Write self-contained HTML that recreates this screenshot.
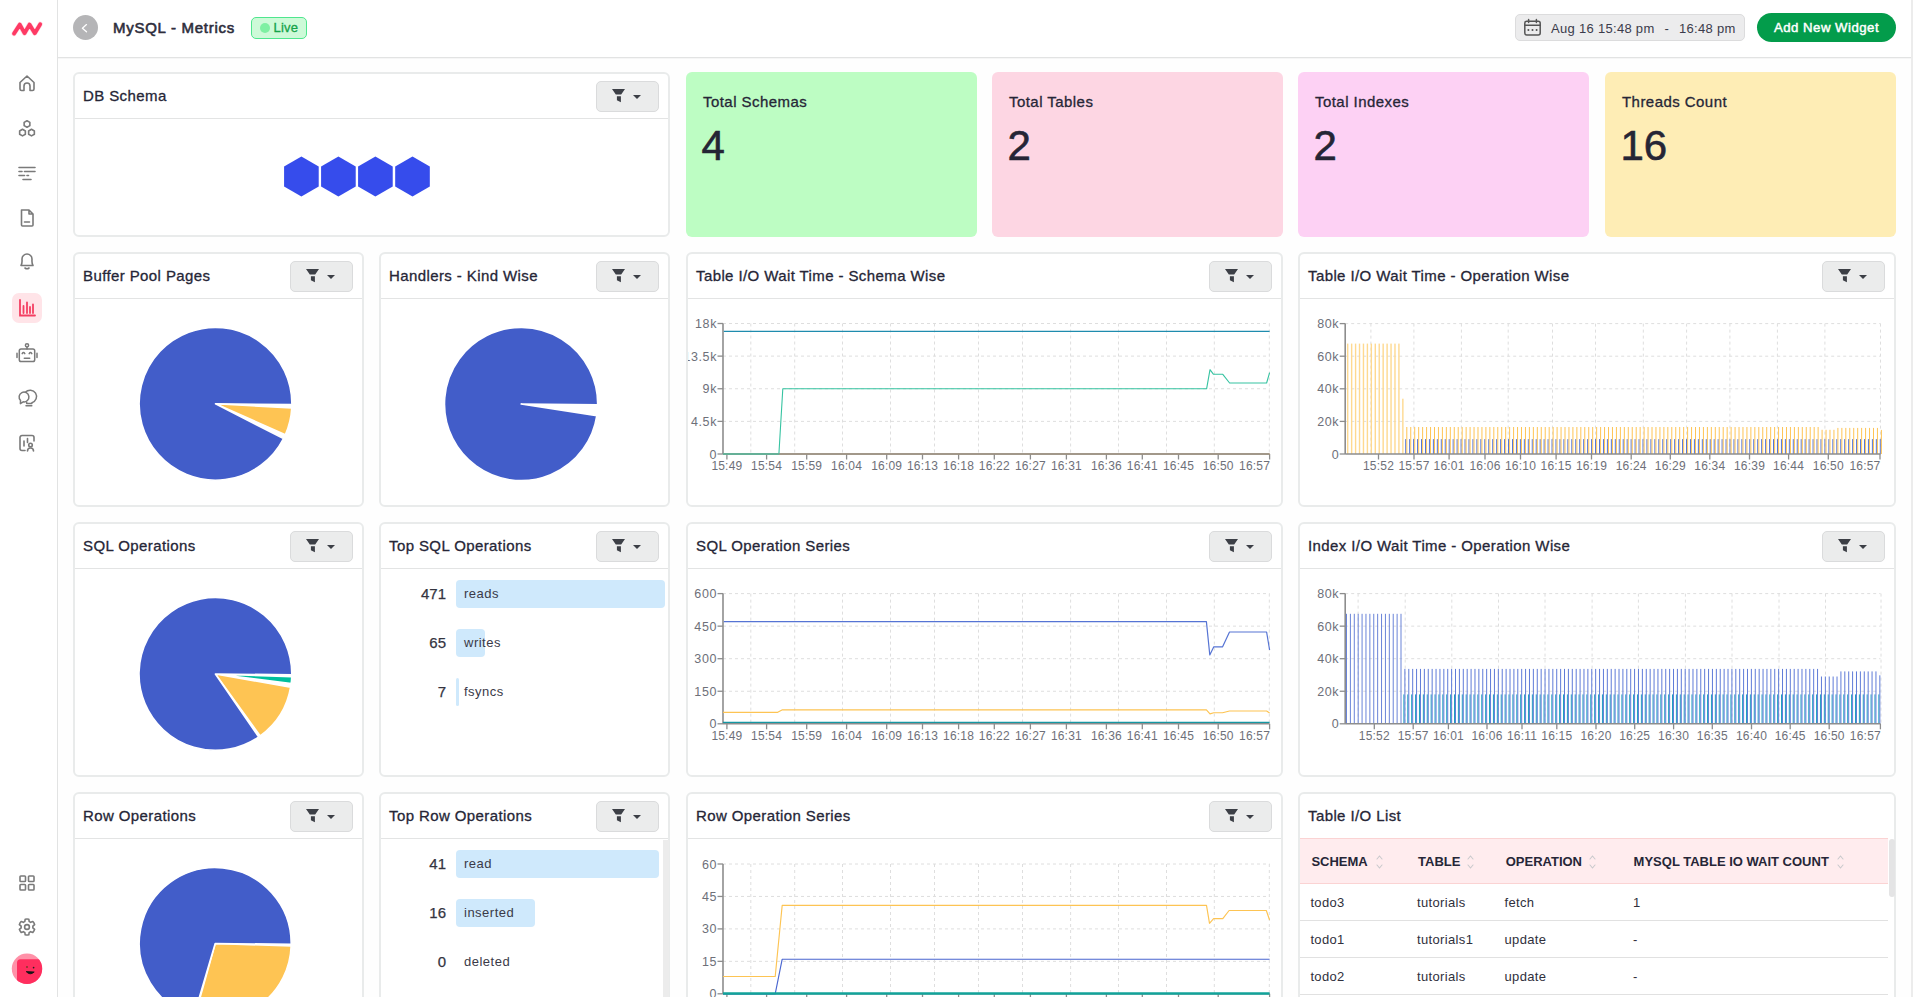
<!DOCTYPE html>
<html><head><meta charset="utf-8"><title>MySQL - Metrics</title>
<style>
*{box-sizing:border-box;margin:0;padding:0}
html,body{width:1913px;height:997px;overflow:hidden;background:#fff;font-family:"Liberation Sans", sans-serif;color:#2b2b3a}
.a{position:absolute}
.card{position:absolute;background:#fff;border:2px solid #e9ebeb;border-radius:6px;overflow:hidden}
.ttl{position:absolute;font-size:15px;letter-spacing:0.4px;color:#262637;-webkit-text-stroke:0.3px #262637;white-space:nowrap;line-height:18px}
.div{position:absolute;height:1px;background:#e3e4e4}
.fbtn{position:absolute;width:63px;height:31px;background:#ebecec;border:1px solid #dadbdc;border-radius:5px}
.stat{position:absolute;border-radius:6px}
.stat .l{position:absolute;left:17px;top:21px;font-size:15px;letter-spacing:0.45px;color:#262637;-webkit-text-stroke:0.3px #262637;white-space:nowrap;line-height:18px}
.stat .v{position:absolute;left:15.5px;top:51px;font-size:42px;color:#252535;-webkit-text-stroke:0.6px #252535;line-height:46px}
.sb svg{position:absolute}
.ax{font-size:12px;fill:#6e7079;font-family:"Liberation Sans", sans-serif;letter-spacing:0.2px}
</style></head><body>

<div class="a" style="left:0;top:0;width:57px;height:997px;background:#fff"></div>
<div class="a" style="left:57px;top:0;width:1px;height:997px;background:#e2e3e3"></div>
<div class="a" style="left:58px;top:58px;width:1853px;height:939px;background:#fefefe"></div>
<div class="a" style="left:58px;top:58px;width:1853px;height:1px;background:#f6f6f6"></div>
<div class="a" style="left:58px;top:57px;width:1853px;height:1px;background:#e2e3e3"></div>
<div class="a" style="left:1911px;top:0;width:2px;height:997px;background:#ececec"></div>
<svg class="a" style="left:10px;top:18px" width="36" height="22" viewBox="0 0 36 22">
<path d="M4 15.6 L9.8 6.6 L14.5 15.2 L19.5 6.6 L24.8 15.2 L30.2 6.2" fill="none" stroke="#ff8fab" stroke-width="5" stroke-linejoin="round" stroke-linecap="round" opacity="0.35"/><path d="M4 15.6 L9.8 6.6 L14.5 15.2 L19.5 6.6 L24.8 15.2 L30.2 6.2" fill="none" stroke="#fe3a64" stroke-width="3.8" stroke-linejoin="round" stroke-linecap="round"/></svg>
<svg class="a" style="left:17.0px;top:73.0px" width="20" height="20" viewBox="0 0 20 20" fill="none" stroke="#7a7a7a" stroke-width="1.6" stroke-linecap="round" stroke-linejoin="round"><path d="M3 9.5 L10 3 L17 9.5 V16 A1.5 1.5 0 0 1 15.5 17.5 H13 V13 A3 3 0 0 0 7 13 V17.5 H4.5 A1.5 1.5 0 0 1 3 16 Z"/></svg>
<svg class="a" style="left:17.0px;top:118.5px" width="20" height="20" viewBox="0 0 20 20" fill="none" stroke="#7a7a7a" stroke-width="1.6" stroke-linecap="round" stroke-linejoin="round"><path d="M10.00 1.70 L12.86 3.35 L12.86 6.65 L10.00 8.30 L7.14 6.65 L7.14 3.35 Z M5.50 10.30 L8.36 11.95 L8.36 15.25 L5.50 16.90 L2.64 15.25 L2.64 11.95 Z M14.50 10.30 L17.36 11.95 L17.36 15.25 L14.50 16.90 L11.64 15.25 L11.64 11.95 Z"/></svg>
<svg class="a" style="left:17.0px;top:164.0px" width="20" height="20" viewBox="0 0 20 20" fill="none" stroke="#7a7a7a" stroke-width="1.6" stroke-linecap="round" stroke-linejoin="round"><path d="M2 3.5 H18 M2 7.5 H5 M7.5 7.5 H18 M2 11.5 H7.5 M10 11.5 H11.5 M6 15.5 H14"/></svg>
<svg class="a" style="left:17.0px;top:207.5px" width="20" height="20" viewBox="0 0 20 20" fill="none" stroke="#7a7a7a" stroke-width="1.6" stroke-linecap="round" stroke-linejoin="round"><path d="M4.5 2 H12 L16 6 V17 A1 1 0 0 1 15 18 H5.5 A1 1 0 0 1 4.5 17 Z M12 2 V6 H16 M7.5 14 H12.5"/></svg>
<svg class="a" style="left:17.0px;top:251.0px" width="20" height="20" viewBox="0 0 20 20" fill="none" stroke="#7a7a7a" stroke-width="1.6" stroke-linecap="round" stroke-linejoin="round"><path d="M4 14.5 C5.5 12.5 5 10 5 8 A5 5 0 0 1 15 8 C15 10 14.5 12.5 16 14.5 Z M8 17 Q10 18.5 12 17"/></svg>
<div class="a" style="left:12px;top:293px;width:30px;height:30px;border-radius:7px;background:#ffe4e8"></div>
<svg class="a" style="left:17px;top:298px" width="20" height="20" viewBox="0 0 20 20" fill="none" stroke="#f43f62" stroke-width="1.8" stroke-linecap="round"><path d="M3 2 V17.5 H18 M6.5 8 V15 M10 4.5 V15 M13 9 V15 M16 6.5 V15"/></svg>
<svg class="a" style="left:12px;top:335px" width="30" height="75" viewBox="12 335 30 75" fill="none" stroke="#7a7a7a" stroke-width="1.5" stroke-linecap="round" stroke-linejoin="round">
<circle cx="27" cy="345.3" r="1.6"/><path d="M27 347 V349"/>
<rect x="19.3" y="349" width="15.4" height="12.6" rx="1.8"/>
<path d="M17 353.2 V357.4 M37 353.2 V357.4 M24.3 358.2 H29.7 M22.2 353.6 Q23.5 351.4 24.8 353.6 M29.2 353.6 Q30.5 351.4 31.8 353.6"/>
<path d="M20.54 400.46 A4.9 4.9 0 1 1 23.15 401.83 L20.4 403.6 Z"/>
<path d="M25.36 392.3 A6.4 6.4 0 1 1 31.9 402.7 V403.6 H26.7 V402.4 M26 405.8 H31.8"/>
</svg>
<svg class="a" style="left:17.0px;top:433.0px" width="20" height="20" viewBox="0 0 20 20" fill="none" stroke="#7a7a7a" stroke-width="1.6" stroke-linecap="round" stroke-linejoin="round"><path d="M8 17.5 H5 A2 2 0 0 1 3 15.5 V4.5 A2 2 0 0 1 5 2.5 H15 A2 2 0 0 1 17 4.5 V8 M7 8 V13 M10.5 5.5 V9.5"/><circle cx="13.5" cy="12" r="1.8"/><path d="M10.5 18 Q10.5 15 13.5 15 Q16.5 15 16.5 18"/></svg>
<svg class="a" style="left:17.0px;top:873.0px" width="20" height="20" viewBox="0 0 20 20" fill="none" stroke="#7a7a7a" stroke-width="1.6" stroke-linecap="round" stroke-linejoin="round"><rect x="3" y="3" width="5.5" height="5.5" rx="0.8"/><rect x="11.5" y="3" width="5.5" height="5.5" rx="0.8"/><rect x="3" y="11.5" width="5.5" height="5.5" rx="0.8"/><rect x="11.5" y="11.5" width="5.5" height="5.5" rx="0.8"/></svg>
<svg class="a" style="left:17.0px;top:917.0px" width="20" height="20" viewBox="0 0 20 20" fill="none" stroke="#7a7a7a" stroke-width="1.6" stroke-linecap="round" stroke-linejoin="round"><path d="M8.20 2.21 A8.0 8.0 0 0 1 11.80 2.21 L12.21 4.53 A5.9 5.9 0 0 1 13.63 5.35 L15.85 4.54 A8.0 8.0 0 0 1 17.65 7.66 L15.84 9.18 A5.9 5.9 0 0 1 15.84 10.82 L17.65 12.34 A8.0 8.0 0 0 1 15.85 15.46 L13.63 14.65 A5.9 5.9 0 0 1 12.21 15.47 L11.80 17.79 A8.0 8.0 0 0 1 8.20 17.79 L7.79 15.47 A5.9 5.9 0 0 1 6.37 14.65 L4.15 15.46 A8.0 8.0 0 0 1 2.35 12.34 L4.16 10.82 A5.9 5.9 0 0 1 4.16 9.18 L2.35 7.66 A8.0 8.0 0 0 1 4.15 4.54 L6.37 5.35 A5.9 5.9 0 0 1 7.79 4.53 Z"/><circle cx="10" cy="10" r="2.4"/></svg>
<svg class="a" style="left:11px;top:953px" width="32" height="32" viewBox="0 0 32 32">
<defs><clipPath id="avc"><circle cx="16" cy="15.8" r="15.2"/></clipPath></defs>
<circle cx="16" cy="15.8" r="15.2" fill="#ff91a8"/>
<g clip-path="url(#avc)"><rect x="6" y="6.2" width="30" height="30" rx="3.5" fill="#ff2e5e"/></g>
<circle cx="16" cy="14" r="0.9" fill="#7a3a22"/><circle cx="22.6" cy="14.6" r="0.85" fill="#222"/>
<path d="M15.2 18.6 Q19 22.8 23.2 19 Z" fill="#151515" stroke="#151515" stroke-width="0.9" stroke-linejoin="round"/></svg>
<div class="a" style="left:73px;top:15px;width:25px;height:25px;border-radius:50%;background:#b5b5b7"></div>
<svg class="a" style="left:73px;top:15px" width="25" height="25" viewBox="0 0 25 25"><path d="M13.5 9.6 L9.4 13.2 L13.5 16.8" fill="none" stroke="#fff" stroke-width="1.3" stroke-linecap="round" stroke-linejoin="round"/></svg>
<div class="a" style="left:113px;top:19px;font-size:15px;letter-spacing:0.72px;color:#2e2e3c;-webkit-text-stroke:0.6px #2e2e3c;line-height:18px;white-space:nowrap">MySQL - Metrics</div>
<div class="a" style="left:251px;top:17px;width:56px;height:22px;border-radius:5px;background:#cdfad8;border:1px solid #4fe68e"></div>
<div class="a" style="left:259.5px;top:22.8px;width:10.5px;height:10.5px;border-radius:50%;background:#7ef0a2"></div>
<div class="a" style="left:273.5px;top:20px;font-size:13px;color:#15a34a;line-height:16px;letter-spacing:0.2px;-webkit-text-stroke:0.3px #15a34a">Live</div>
<div class="a" style="left:1515px;top:14px;width:230px;height:27px;border-radius:5px;background:#ececed;border:1px solid #dcdcdd"></div>
<svg class="a" style="left:1523px;top:18px" width="19" height="19" viewBox="0 0 19 19" fill="none" stroke="#555" stroke-width="1.5" stroke-linecap="round"><rect x="1.8" y="3.2" width="15.4" height="13.8" rx="2"/><path d="M1.8 7.3 H17.2 M5.6 1.5 V4.5 M13.4 1.5 V4.5"/><path d="M5.3 12 H5.5 M9.4 12 H9.6 M13.5 12 H13.7" stroke-width="1.8"/></svg>
<div class="a" style="left:1551px;top:21px;font-size:13px;color:#3b3b4b;line-height:15px;white-space:pre;letter-spacing:0.3px">Aug 16 15:48 pm</div>
<div class="a" style="left:1664.5px;top:21px;font-size:13px;color:#3b3b4b;line-height:15px;white-space:pre">-</div>
<div class="a" style="left:1679px;top:21px;font-size:13px;color:#3b3b4b;line-height:15px;white-space:pre;letter-spacing:0.3px">16:48 pm</div>
<div class="a" style="left:1757px;top:13px;width:139px;height:29px;border-radius:15px;background:#039c4b"></div>
<div class="a" style="left:1757px;top:20px;width:139px;text-align:center;font-size:13.2px;color:#fff;line-height:15px;letter-spacing:0.5px;-webkit-text-stroke:0.45px #fff">Add New Widget</div>
<div class="card" style="left:73px;top:72px;width:597px;height:165px"></div>
<div class="ttl" style="left:83px;top:87px">DB Schema</div>
<div class="div" style="left:75px;top:118px;width:593px"></div>
<div class="fbtn" style="left:595.5px;top:81px"></div>
<svg class="a" style="left:612.2px;top:89px" width="30" height="15" viewBox="0 0 30 15"><path d="M0 0 H13 L9.2 5.5 H3.8 Z M4.9 7.2 H8.9 V13.2 L4.9 11.3 Z" fill="#3c3f46"/><path d="M21 6 H29 L25 10 Z" fill="#3c3f46"/></svg>
<svg class="a" style="left:0;top:0;overflow:visible" width="1" height="1"><polygon points="301.40,156.50 318.72,166.50 318.72,186.50 301.40,196.50 284.08,186.50 284.08,166.50" fill="#364cec"/></svg>
<svg class="a" style="left:0;top:0;overflow:visible" width="1" height="1"><polygon points="338.40,156.50 355.72,166.50 355.72,186.50 338.40,196.50 321.08,186.50 321.08,166.50" fill="#364cec"/></svg>
<svg class="a" style="left:0;top:0;overflow:visible" width="1" height="1"><polygon points="375.40,156.50 392.72,166.50 392.72,186.50 375.40,196.50 358.08,186.50 358.08,166.50" fill="#364cec"/></svg>
<svg class="a" style="left:0;top:0;overflow:visible" width="1" height="1"><polygon points="412.50,156.50 429.82,166.50 429.82,186.50 412.50,196.50 395.18,186.50 395.18,166.50" fill="#364cec"/></svg>
<div class="stat" style="left:686px;top:72px;width:291px;height:165px;background:#bdfdc3"><div class="l">Total Schemas</div><div class="v">4</div></div>
<div class="stat" style="left:992px;top:72px;width:291px;height:165px;background:#fdd6e3"><div class="l">Total Tables</div><div class="v">2</div></div>
<div class="stat" style="left:1298px;top:72px;width:291px;height:165px;background:#fdd1f4"><div class="l">Total Indexes</div><div class="v">2</div></div>
<div class="stat" style="left:1605px;top:72px;width:291px;height:165px;background:#feedb5"><div class="l">Threads Count</div><div class="v">16</div></div>
<div class="card" style="left:73px;top:252px;width:291px;height:255px"></div>
<div class="ttl" style="left:83px;top:267px">Buffer Pool Pages</div>
<div class="div" style="left:75px;top:298px;width:287px"></div>
<div class="fbtn" style="left:289.5px;top:261px"></div>
<svg class="a" style="left:306.2px;top:269px" width="30" height="15" viewBox="0 0 30 15"><path d="M0 0 H13 L9.2 5.5 H3.8 Z M4.9 7.2 H8.9 V13.2 L4.9 11.3 Z" fill="#3c3f46"/><path d="M21 6 H29 L25 10 Z" fill="#3c3f46"/></svg>
<div class="card" style="left:379px;top:252px;width:291px;height:255px"></div>
<div class="ttl" style="left:389px;top:267px">Handlers - Kind Wise</div>
<div class="div" style="left:381px;top:298px;width:287px"></div>
<div class="fbtn" style="left:595.5px;top:261px"></div>
<svg class="a" style="left:612.2px;top:269px" width="30" height="15" viewBox="0 0 30 15"><path d="M0 0 H13 L9.2 5.5 H3.8 Z M4.9 7.2 H8.9 V13.2 L4.9 11.3 Z" fill="#3c3f46"/><path d="M21 6 H29 L25 10 Z" fill="#3c3f46"/></svg>
<div class="card" style="left:686px;top:252px;width:597px;height:255px"></div>
<div class="ttl" style="left:696px;top:267px">Table I/O Wait Time - Schema Wise</div>
<div class="div" style="left:688px;top:298px;width:593px"></div>
<div class="fbtn" style="left:1208.5px;top:261px"></div>
<svg class="a" style="left:1225.2px;top:269px" width="30" height="15" viewBox="0 0 30 15"><path d="M0 0 H13 L9.2 5.5 H3.8 Z M4.9 7.2 H8.9 V13.2 L4.9 11.3 Z" fill="#3c3f46"/><path d="M21 6 H29 L25 10 Z" fill="#3c3f46"/></svg>
<div class="card" style="left:1298px;top:252px;width:598px;height:255px"></div>
<div class="ttl" style="left:1308px;top:267px">Table I/O Wait Time - Operation Wise</div>
<div class="div" style="left:1300px;top:298px;width:594px"></div>
<div class="fbtn" style="left:1821.5px;top:261px"></div>
<svg class="a" style="left:1838.2px;top:269px" width="30" height="15" viewBox="0 0 30 15"><path d="M0 0 H13 L9.2 5.5 H3.8 Z M4.9 7.2 H8.9 V13.2 L4.9 11.3 Z" fill="#3c3f46"/><path d="M21 6 H29 L25 10 Z" fill="#3c3f46"/></svg>
<div class="card" style="left:73px;top:522px;width:291px;height:255px"></div>
<div class="ttl" style="left:83px;top:537px">SQL Operations</div>
<div class="div" style="left:75px;top:568px;width:287px"></div>
<div class="fbtn" style="left:289.5px;top:531px"></div>
<svg class="a" style="left:306.2px;top:539px" width="30" height="15" viewBox="0 0 30 15"><path d="M0 0 H13 L9.2 5.5 H3.8 Z M4.9 7.2 H8.9 V13.2 L4.9 11.3 Z" fill="#3c3f46"/><path d="M21 6 H29 L25 10 Z" fill="#3c3f46"/></svg>
<div class="card" style="left:379px;top:522px;width:291px;height:255px"></div>
<div class="ttl" style="left:389px;top:537px">Top SQL Operations</div>
<div class="div" style="left:381px;top:568px;width:287px"></div>
<div class="fbtn" style="left:595.5px;top:531px"></div>
<svg class="a" style="left:612.2px;top:539px" width="30" height="15" viewBox="0 0 30 15"><path d="M0 0 H13 L9.2 5.5 H3.8 Z M4.9 7.2 H8.9 V13.2 L4.9 11.3 Z" fill="#3c3f46"/><path d="M21 6 H29 L25 10 Z" fill="#3c3f46"/></svg>
<div class="card" style="left:686px;top:522px;width:597px;height:255px"></div>
<div class="ttl" style="left:696px;top:537px">SQL Operation Series</div>
<div class="div" style="left:688px;top:568px;width:593px"></div>
<div class="fbtn" style="left:1208.5px;top:531px"></div>
<svg class="a" style="left:1225.2px;top:539px" width="30" height="15" viewBox="0 0 30 15"><path d="M0 0 H13 L9.2 5.5 H3.8 Z M4.9 7.2 H8.9 V13.2 L4.9 11.3 Z" fill="#3c3f46"/><path d="M21 6 H29 L25 10 Z" fill="#3c3f46"/></svg>
<div class="card" style="left:1298px;top:522px;width:598px;height:255px"></div>
<div class="ttl" style="left:1308px;top:537px">Index I/O Wait Time - Operation Wise</div>
<div class="div" style="left:1300px;top:568px;width:594px"></div>
<div class="fbtn" style="left:1821.5px;top:531px"></div>
<svg class="a" style="left:1838.2px;top:539px" width="30" height="15" viewBox="0 0 30 15"><path d="M0 0 H13 L9.2 5.5 H3.8 Z M4.9 7.2 H8.9 V13.2 L4.9 11.3 Z" fill="#3c3f46"/><path d="M21 6 H29 L25 10 Z" fill="#3c3f46"/></svg>
<div class="card" style="left:73px;top:792px;width:291px;height:255px"></div>
<div class="ttl" style="left:83px;top:807px">Row Operations</div>
<div class="div" style="left:75px;top:838px;width:287px"></div>
<div class="fbtn" style="left:289.5px;top:801px"></div>
<svg class="a" style="left:306.2px;top:809px" width="30" height="15" viewBox="0 0 30 15"><path d="M0 0 H13 L9.2 5.5 H3.8 Z M4.9 7.2 H8.9 V13.2 L4.9 11.3 Z" fill="#3c3f46"/><path d="M21 6 H29 L25 10 Z" fill="#3c3f46"/></svg>
<div class="card" style="left:379px;top:792px;width:291px;height:255px"></div>
<div class="ttl" style="left:389px;top:807px">Top Row Operations</div>
<div class="div" style="left:381px;top:838px;width:287px"></div>
<div class="fbtn" style="left:595.5px;top:801px"></div>
<svg class="a" style="left:612.2px;top:809px" width="30" height="15" viewBox="0 0 30 15"><path d="M0 0 H13 L9.2 5.5 H3.8 Z M4.9 7.2 H8.9 V13.2 L4.9 11.3 Z" fill="#3c3f46"/><path d="M21 6 H29 L25 10 Z" fill="#3c3f46"/></svg>
<div class="card" style="left:686px;top:792px;width:597px;height:255px"></div>
<div class="ttl" style="left:696px;top:807px">Row Operation Series</div>
<div class="div" style="left:688px;top:838px;width:593px"></div>
<div class="fbtn" style="left:1208.5px;top:801px"></div>
<svg class="a" style="left:1225.2px;top:809px" width="30" height="15" viewBox="0 0 30 15"><path d="M0 0 H13 L9.2 5.5 H3.8 Z M4.9 7.2 H8.9 V13.2 L4.9 11.3 Z" fill="#3c3f46"/><path d="M21 6 H29 L25 10 Z" fill="#3c3f46"/></svg>
<div class="card" style="left:1298px;top:792px;width:598px;height:255px"></div>
<div class="ttl" style="left:1308px;top:807px">Table I/O List</div>
<svg class="a" style="left:0;top:0" width="1913" height="997" viewBox="0 0 1913 997"><clipPath id="c23"><rect x="688" y="300" width="593" height="205"/></clipPath>
<g clip-path="url(#c23)">
<line x1="723" y1="323.50" x2="1269.6" y2="323.50" stroke="#dedede" stroke-width="1" stroke-dasharray="3 3"/>
<line x1="717.5" y1="323.50" x2="723" y2="323.50" stroke="#8d8d8d" stroke-width="1.3"/>
<text x="717" y="328.00" text-anchor="end" class="ax" style="font-size:12.5px;letter-spacing:0.6px">18k</text>
<line x1="723" y1="356.12" x2="1269.6" y2="356.12" stroke="#dedede" stroke-width="1" stroke-dasharray="3 3"/>
<line x1="717.5" y1="356.12" x2="723" y2="356.12" stroke="#8d8d8d" stroke-width="1.3"/>
<text x="717" y="360.62" text-anchor="end" class="ax" style="font-size:12.5px;letter-spacing:0.6px">13.5k</text>
<line x1="723" y1="388.75" x2="1269.6" y2="388.75" stroke="#dedede" stroke-width="1" stroke-dasharray="3 3"/>
<line x1="717.5" y1="388.75" x2="723" y2="388.75" stroke="#8d8d8d" stroke-width="1.3"/>
<text x="717" y="393.25" text-anchor="end" class="ax" style="font-size:12.5px;letter-spacing:0.6px">9k</text>
<line x1="723" y1="421.38" x2="1269.6" y2="421.38" stroke="#dedede" stroke-width="1" stroke-dasharray="3 3"/>
<line x1="717.5" y1="421.38" x2="723" y2="421.38" stroke="#8d8d8d" stroke-width="1.3"/>
<text x="717" y="425.88" text-anchor="end" class="ax" style="font-size:12.5px;letter-spacing:0.6px">4.5k</text>
<line x1="717.5" y1="454.00" x2="723" y2="454.00" stroke="#8d8d8d" stroke-width="1.3"/>
<text x="717" y="458.50" text-anchor="end" class="ax" style="font-size:12.5px;letter-spacing:0.6px">0</text>
<line x1="750.8" y1="323.5" x2="750.8" y2="454" stroke="#dedede" stroke-width="1" stroke-dasharray="3 3"/>
<line x1="794.7" y1="323.5" x2="794.7" y2="454" stroke="#dedede" stroke-width="1" stroke-dasharray="3 3"/>
<line x1="842.5" y1="323.5" x2="842.5" y2="454" stroke="#dedede" stroke-width="1" stroke-dasharray="3 3"/>
<line x1="890.5" y1="323.5" x2="890.5" y2="454" stroke="#dedede" stroke-width="1" stroke-dasharray="3 3"/>
<line x1="934.5" y1="323.5" x2="934.5" y2="454" stroke="#dedede" stroke-width="1" stroke-dasharray="3 3"/>
<line x1="978.5" y1="323.5" x2="978.5" y2="454" stroke="#dedede" stroke-width="1" stroke-dasharray="3 3"/>
<line x1="1022.5" y1="323.5" x2="1022.5" y2="454" stroke="#dedede" stroke-width="1" stroke-dasharray="3 3"/>
<line x1="1070.6" y1="323.5" x2="1070.6" y2="454" stroke="#dedede" stroke-width="1" stroke-dasharray="3 3"/>
<line x1="1118.5" y1="323.5" x2="1118.5" y2="454" stroke="#dedede" stroke-width="1" stroke-dasharray="3 3"/>
<line x1="1166.5" y1="323.5" x2="1166.5" y2="454" stroke="#dedede" stroke-width="1" stroke-dasharray="3 3"/>
<line x1="1214.3" y1="323.5" x2="1214.3" y2="454" stroke="#dedede" stroke-width="1" stroke-dasharray="3 3"/>
<line x1="1269.3" y1="323.5" x2="1269.3" y2="454" stroke="#dedede" stroke-width="1" stroke-dasharray="3 3"/>
<line x1="726.9" y1="454" x2="726.9" y2="459.5" stroke="#8d8d8d" stroke-width="1.3"/>
<text x="726.9" y="470.20" text-anchor="middle" class="ax">15:49</text>
<line x1="766.6" y1="454" x2="766.6" y2="459.5" stroke="#8d8d8d" stroke-width="1.3"/>
<text x="766.6" y="470.20" text-anchor="middle" class="ax">15:54</text>
<line x1="806.7" y1="454" x2="806.7" y2="459.5" stroke="#8d8d8d" stroke-width="1.3"/>
<text x="806.7" y="470.20" text-anchor="middle" class="ax">15:59</text>
<line x1="846.6" y1="454" x2="846.6" y2="459.5" stroke="#8d8d8d" stroke-width="1.3"/>
<text x="846.6" y="470.20" text-anchor="middle" class="ax">16:04</text>
<line x1="886.7" y1="454" x2="886.7" y2="459.5" stroke="#8d8d8d" stroke-width="1.3"/>
<text x="886.7" y="470.20" text-anchor="middle" class="ax">16:09</text>
<line x1="922.5" y1="454" x2="922.5" y2="459.5" stroke="#8d8d8d" stroke-width="1.3"/>
<text x="922.5" y="470.20" text-anchor="middle" class="ax">16:13</text>
<line x1="958.6" y1="454" x2="958.6" y2="459.5" stroke="#8d8d8d" stroke-width="1.3"/>
<text x="958.6" y="470.20" text-anchor="middle" class="ax">16:18</text>
<line x1="994.3" y1="454" x2="994.3" y2="459.5" stroke="#8d8d8d" stroke-width="1.3"/>
<text x="994.3" y="470.20" text-anchor="middle" class="ax">16:22</text>
<line x1="1030.4" y1="454" x2="1030.4" y2="459.5" stroke="#8d8d8d" stroke-width="1.3"/>
<text x="1030.4" y="470.20" text-anchor="middle" class="ax">16:27</text>
<line x1="1066.4" y1="454" x2="1066.4" y2="459.5" stroke="#8d8d8d" stroke-width="1.3"/>
<text x="1066.4" y="470.20" text-anchor="middle" class="ax">16:31</text>
<line x1="1106.4" y1="454" x2="1106.4" y2="459.5" stroke="#8d8d8d" stroke-width="1.3"/>
<text x="1106.4" y="470.20" text-anchor="middle" class="ax">16:36</text>
<line x1="1142.3" y1="454" x2="1142.3" y2="459.5" stroke="#8d8d8d" stroke-width="1.3"/>
<text x="1142.3" y="470.20" text-anchor="middle" class="ax">16:41</text>
<line x1="1178.5" y1="454" x2="1178.5" y2="459.5" stroke="#8d8d8d" stroke-width="1.3"/>
<text x="1178.5" y="470.20" text-anchor="middle" class="ax">16:45</text>
<line x1="1218.2" y1="454" x2="1218.2" y2="459.5" stroke="#8d8d8d" stroke-width="1.3"/>
<text x="1218.2" y="470.20" text-anchor="middle" class="ax">16:50</text>
<line x1="1269.6" y1="454" x2="1269.6" y2="459.5" stroke="#8d8d8d" stroke-width="1.3"/>
<text x="1270.1" y="470.20" text-anchor="end" class="ax">16:57</text>
<path d="M723.00 454.00 L1269.60 454.00" fill="none" stroke="#d8a45a" stroke-width="1.6" stroke-linejoin="round" opacity="1"/>
<path d="M723.00 454.00 L778.90 454.00 L782.80 388.80 L1206.60 388.80 L1210.00 369.70 L1213.50 374.30 L1222.80 374.30 L1229.60 383.00 L1266.60 383.00 L1269.60 372.70" fill="none" stroke="#36c3a1" stroke-width="1.1" stroke-linejoin="round" opacity="1"/>
<line x1="723" y1="323.5" x2="723" y2="454" stroke="#8d8d8d" stroke-width="1.6"/>
<line x1="723" y1="454" x2="1269.6" y2="454" stroke="#8d8d8d" stroke-width="1.6"/>
<path d="M723.00 454.00 L778.90 454.00" fill="none" stroke="#58b89a" stroke-width="1.6" stroke-linejoin="round" opacity="1"/>
<path d="M723.80 331.30 L1269.60 331.30" fill="none" stroke="#1f8cae" stroke-width="1.15" stroke-linejoin="round" opacity="1"/>
</g>
<clipPath id="c33"><rect x="688" y="570" width="593" height="205"/></clipPath>
<g clip-path="url(#c33)">
<line x1="723" y1="593.60" x2="1269.6" y2="593.60" stroke="#dedede" stroke-width="1" stroke-dasharray="3 3"/>
<line x1="717.5" y1="593.60" x2="723" y2="593.60" stroke="#8d8d8d" stroke-width="1.3"/>
<text x="717" y="598.10" text-anchor="end" class="ax" style="font-size:12.5px;letter-spacing:0.6px">600</text>
<line x1="723" y1="626.15" x2="1269.6" y2="626.15" stroke="#dedede" stroke-width="1" stroke-dasharray="3 3"/>
<line x1="717.5" y1="626.15" x2="723" y2="626.15" stroke="#8d8d8d" stroke-width="1.3"/>
<text x="717" y="630.65" text-anchor="end" class="ax" style="font-size:12.5px;letter-spacing:0.6px">450</text>
<line x1="723" y1="658.70" x2="1269.6" y2="658.70" stroke="#dedede" stroke-width="1" stroke-dasharray="3 3"/>
<line x1="717.5" y1="658.70" x2="723" y2="658.70" stroke="#8d8d8d" stroke-width="1.3"/>
<text x="717" y="663.20" text-anchor="end" class="ax" style="font-size:12.5px;letter-spacing:0.6px">300</text>
<line x1="723" y1="691.25" x2="1269.6" y2="691.25" stroke="#dedede" stroke-width="1" stroke-dasharray="3 3"/>
<line x1="717.5" y1="691.25" x2="723" y2="691.25" stroke="#8d8d8d" stroke-width="1.3"/>
<text x="717" y="695.75" text-anchor="end" class="ax" style="font-size:12.5px;letter-spacing:0.6px">150</text>
<line x1="717.5" y1="723.80" x2="723" y2="723.80" stroke="#8d8d8d" stroke-width="1.3"/>
<text x="717" y="728.30" text-anchor="end" class="ax" style="font-size:12.5px;letter-spacing:0.6px">0</text>
<line x1="750.8" y1="593.6" x2="750.8" y2="723.8" stroke="#dedede" stroke-width="1" stroke-dasharray="3 3"/>
<line x1="794.7" y1="593.6" x2="794.7" y2="723.8" stroke="#dedede" stroke-width="1" stroke-dasharray="3 3"/>
<line x1="842.5" y1="593.6" x2="842.5" y2="723.8" stroke="#dedede" stroke-width="1" stroke-dasharray="3 3"/>
<line x1="890.5" y1="593.6" x2="890.5" y2="723.8" stroke="#dedede" stroke-width="1" stroke-dasharray="3 3"/>
<line x1="934.5" y1="593.6" x2="934.5" y2="723.8" stroke="#dedede" stroke-width="1" stroke-dasharray="3 3"/>
<line x1="978.5" y1="593.6" x2="978.5" y2="723.8" stroke="#dedede" stroke-width="1" stroke-dasharray="3 3"/>
<line x1="1022.5" y1="593.6" x2="1022.5" y2="723.8" stroke="#dedede" stroke-width="1" stroke-dasharray="3 3"/>
<line x1="1070.6" y1="593.6" x2="1070.6" y2="723.8" stroke="#dedede" stroke-width="1" stroke-dasharray="3 3"/>
<line x1="1118.5" y1="593.6" x2="1118.5" y2="723.8" stroke="#dedede" stroke-width="1" stroke-dasharray="3 3"/>
<line x1="1166.5" y1="593.6" x2="1166.5" y2="723.8" stroke="#dedede" stroke-width="1" stroke-dasharray="3 3"/>
<line x1="1214.3" y1="593.6" x2="1214.3" y2="723.8" stroke="#dedede" stroke-width="1" stroke-dasharray="3 3"/>
<line x1="1269.3" y1="593.6" x2="1269.3" y2="723.8" stroke="#dedede" stroke-width="1" stroke-dasharray="3 3"/>
<line x1="726.9" y1="723.8" x2="726.9" y2="729.3" stroke="#8d8d8d" stroke-width="1.3"/>
<text x="726.9" y="740.00" text-anchor="middle" class="ax">15:49</text>
<line x1="766.6" y1="723.8" x2="766.6" y2="729.3" stroke="#8d8d8d" stroke-width="1.3"/>
<text x="766.6" y="740.00" text-anchor="middle" class="ax">15:54</text>
<line x1="806.7" y1="723.8" x2="806.7" y2="729.3" stroke="#8d8d8d" stroke-width="1.3"/>
<text x="806.7" y="740.00" text-anchor="middle" class="ax">15:59</text>
<line x1="846.6" y1="723.8" x2="846.6" y2="729.3" stroke="#8d8d8d" stroke-width="1.3"/>
<text x="846.6" y="740.00" text-anchor="middle" class="ax">16:04</text>
<line x1="886.7" y1="723.8" x2="886.7" y2="729.3" stroke="#8d8d8d" stroke-width="1.3"/>
<text x="886.7" y="740.00" text-anchor="middle" class="ax">16:09</text>
<line x1="922.5" y1="723.8" x2="922.5" y2="729.3" stroke="#8d8d8d" stroke-width="1.3"/>
<text x="922.5" y="740.00" text-anchor="middle" class="ax">16:13</text>
<line x1="958.6" y1="723.8" x2="958.6" y2="729.3" stroke="#8d8d8d" stroke-width="1.3"/>
<text x="958.6" y="740.00" text-anchor="middle" class="ax">16:18</text>
<line x1="994.3" y1="723.8" x2="994.3" y2="729.3" stroke="#8d8d8d" stroke-width="1.3"/>
<text x="994.3" y="740.00" text-anchor="middle" class="ax">16:22</text>
<line x1="1030.4" y1="723.8" x2="1030.4" y2="729.3" stroke="#8d8d8d" stroke-width="1.3"/>
<text x="1030.4" y="740.00" text-anchor="middle" class="ax">16:27</text>
<line x1="1066.4" y1="723.8" x2="1066.4" y2="729.3" stroke="#8d8d8d" stroke-width="1.3"/>
<text x="1066.4" y="740.00" text-anchor="middle" class="ax">16:31</text>
<line x1="1106.4" y1="723.8" x2="1106.4" y2="729.3" stroke="#8d8d8d" stroke-width="1.3"/>
<text x="1106.4" y="740.00" text-anchor="middle" class="ax">16:36</text>
<line x1="1142.3" y1="723.8" x2="1142.3" y2="729.3" stroke="#8d8d8d" stroke-width="1.3"/>
<text x="1142.3" y="740.00" text-anchor="middle" class="ax">16:41</text>
<line x1="1178.5" y1="723.8" x2="1178.5" y2="729.3" stroke="#8d8d8d" stroke-width="1.3"/>
<text x="1178.5" y="740.00" text-anchor="middle" class="ax">16:45</text>
<line x1="1218.2" y1="723.8" x2="1218.2" y2="729.3" stroke="#8d8d8d" stroke-width="1.3"/>
<text x="1218.2" y="740.00" text-anchor="middle" class="ax">16:50</text>
<line x1="1269.6" y1="723.8" x2="1269.6" y2="729.3" stroke="#8d8d8d" stroke-width="1.3"/>
<text x="1270.1" y="740.00" text-anchor="end" class="ax">16:57</text>
<line x1="723" y1="593.6" x2="723" y2="723.8" stroke="#8d8d8d" stroke-width="1.6"/>
<line x1="723" y1="723.8" x2="1269.6" y2="723.8" stroke="#8d8d8d" stroke-width="1.6"/>
<path d="M723.00 722.40 L1269.60 722.40" fill="none" stroke="#1597a3" stroke-width="1.3" stroke-linejoin="round" opacity="1"/>
<path d="M723.00 712.40 L777.30 712.40 L782.40 709.80 L1206.40 709.80 L1210.00 713.90 L1213.80 712.70 L1222.60 712.70 L1229.50 711.00 L1266.60 711.00 L1269.60 713.00" fill="none" stroke="#fdc453" stroke-width="1.15" stroke-linejoin="round" opacity="1"/>
<path d="M723.80 621.60 L1206.40 621.60 L1209.80 655.00 L1213.80 646.80 L1222.60 646.80 L1229.50 632.00 L1266.60 632.00 L1269.60 650.00" fill="none" stroke="#5674d4" stroke-width="1.2" stroke-linejoin="round" opacity="1"/>
</g>
<clipPath id="c43"><rect x="688" y="840" width="593" height="157"/></clipPath>
<g clip-path="url(#c43)">
<line x1="723" y1="864.00" x2="1269.6" y2="864.00" stroke="#dedede" stroke-width="1" stroke-dasharray="3 3"/>
<line x1="717.5" y1="864.00" x2="723" y2="864.00" stroke="#8d8d8d" stroke-width="1.3"/>
<text x="717" y="868.50" text-anchor="end" class="ax" style="font-size:12.5px;letter-spacing:0.6px">60</text>
<line x1="723" y1="896.45" x2="1269.6" y2="896.45" stroke="#dedede" stroke-width="1" stroke-dasharray="3 3"/>
<line x1="717.5" y1="896.45" x2="723" y2="896.45" stroke="#8d8d8d" stroke-width="1.3"/>
<text x="717" y="900.95" text-anchor="end" class="ax" style="font-size:12.5px;letter-spacing:0.6px">45</text>
<line x1="723" y1="928.90" x2="1269.6" y2="928.90" stroke="#dedede" stroke-width="1" stroke-dasharray="3 3"/>
<line x1="717.5" y1="928.90" x2="723" y2="928.90" stroke="#8d8d8d" stroke-width="1.3"/>
<text x="717" y="933.40" text-anchor="end" class="ax" style="font-size:12.5px;letter-spacing:0.6px">30</text>
<line x1="723" y1="961.35" x2="1269.6" y2="961.35" stroke="#dedede" stroke-width="1" stroke-dasharray="3 3"/>
<line x1="717.5" y1="961.35" x2="723" y2="961.35" stroke="#8d8d8d" stroke-width="1.3"/>
<text x="717" y="965.85" text-anchor="end" class="ax" style="font-size:12.5px;letter-spacing:0.6px">15</text>
<line x1="717.5" y1="993.80" x2="723" y2="993.80" stroke="#8d8d8d" stroke-width="1.3"/>
<text x="717" y="998.30" text-anchor="end" class="ax" style="font-size:12.5px;letter-spacing:0.6px">0</text>
<line x1="750.8" y1="864" x2="750.8" y2="993.8" stroke="#dedede" stroke-width="1" stroke-dasharray="3 3"/>
<line x1="794.7" y1="864" x2="794.7" y2="993.8" stroke="#dedede" stroke-width="1" stroke-dasharray="3 3"/>
<line x1="842.5" y1="864" x2="842.5" y2="993.8" stroke="#dedede" stroke-width="1" stroke-dasharray="3 3"/>
<line x1="890.5" y1="864" x2="890.5" y2="993.8" stroke="#dedede" stroke-width="1" stroke-dasharray="3 3"/>
<line x1="934.5" y1="864" x2="934.5" y2="993.8" stroke="#dedede" stroke-width="1" stroke-dasharray="3 3"/>
<line x1="978.5" y1="864" x2="978.5" y2="993.8" stroke="#dedede" stroke-width="1" stroke-dasharray="3 3"/>
<line x1="1022.5" y1="864" x2="1022.5" y2="993.8" stroke="#dedede" stroke-width="1" stroke-dasharray="3 3"/>
<line x1="1070.6" y1="864" x2="1070.6" y2="993.8" stroke="#dedede" stroke-width="1" stroke-dasharray="3 3"/>
<line x1="1118.5" y1="864" x2="1118.5" y2="993.8" stroke="#dedede" stroke-width="1" stroke-dasharray="3 3"/>
<line x1="1166.5" y1="864" x2="1166.5" y2="993.8" stroke="#dedede" stroke-width="1" stroke-dasharray="3 3"/>
<line x1="1214.3" y1="864" x2="1214.3" y2="993.8" stroke="#dedede" stroke-width="1" stroke-dasharray="3 3"/>
<line x1="1269.3" y1="864" x2="1269.3" y2="993.8" stroke="#dedede" stroke-width="1" stroke-dasharray="3 3"/>
<line x1="726.9" y1="993.8" x2="726.9" y2="999.3" stroke="#8d8d8d" stroke-width="1.3"/>
<text x="726.9" y="1010.00" text-anchor="middle" class="ax">15:49</text>
<line x1="766.6" y1="993.8" x2="766.6" y2="999.3" stroke="#8d8d8d" stroke-width="1.3"/>
<text x="766.6" y="1010.00" text-anchor="middle" class="ax">15:54</text>
<line x1="806.7" y1="993.8" x2="806.7" y2="999.3" stroke="#8d8d8d" stroke-width="1.3"/>
<text x="806.7" y="1010.00" text-anchor="middle" class="ax">15:59</text>
<line x1="846.6" y1="993.8" x2="846.6" y2="999.3" stroke="#8d8d8d" stroke-width="1.3"/>
<text x="846.6" y="1010.00" text-anchor="middle" class="ax">16:04</text>
<line x1="886.7" y1="993.8" x2="886.7" y2="999.3" stroke="#8d8d8d" stroke-width="1.3"/>
<text x="886.7" y="1010.00" text-anchor="middle" class="ax">16:09</text>
<line x1="922.5" y1="993.8" x2="922.5" y2="999.3" stroke="#8d8d8d" stroke-width="1.3"/>
<text x="922.5" y="1010.00" text-anchor="middle" class="ax">16:13</text>
<line x1="958.6" y1="993.8" x2="958.6" y2="999.3" stroke="#8d8d8d" stroke-width="1.3"/>
<text x="958.6" y="1010.00" text-anchor="middle" class="ax">16:18</text>
<line x1="994.3" y1="993.8" x2="994.3" y2="999.3" stroke="#8d8d8d" stroke-width="1.3"/>
<text x="994.3" y="1010.00" text-anchor="middle" class="ax">16:22</text>
<line x1="1030.4" y1="993.8" x2="1030.4" y2="999.3" stroke="#8d8d8d" stroke-width="1.3"/>
<text x="1030.4" y="1010.00" text-anchor="middle" class="ax">16:27</text>
<line x1="1066.4" y1="993.8" x2="1066.4" y2="999.3" stroke="#8d8d8d" stroke-width="1.3"/>
<text x="1066.4" y="1010.00" text-anchor="middle" class="ax">16:31</text>
<line x1="1106.4" y1="993.8" x2="1106.4" y2="999.3" stroke="#8d8d8d" stroke-width="1.3"/>
<text x="1106.4" y="1010.00" text-anchor="middle" class="ax">16:36</text>
<line x1="1142.3" y1="993.8" x2="1142.3" y2="999.3" stroke="#8d8d8d" stroke-width="1.3"/>
<text x="1142.3" y="1010.00" text-anchor="middle" class="ax">16:41</text>
<line x1="1178.5" y1="993.8" x2="1178.5" y2="999.3" stroke="#8d8d8d" stroke-width="1.3"/>
<text x="1178.5" y="1010.00" text-anchor="middle" class="ax">16:45</text>
<line x1="1218.2" y1="993.8" x2="1218.2" y2="999.3" stroke="#8d8d8d" stroke-width="1.3"/>
<text x="1218.2" y="1010.00" text-anchor="middle" class="ax">16:50</text>
<line x1="1269.6" y1="993.8" x2="1269.6" y2="999.3" stroke="#8d8d8d" stroke-width="1.3"/>
<text x="1270.1" y="1010.00" text-anchor="end" class="ax">16:57</text>
<line x1="723" y1="864" x2="723" y2="993.8" stroke="#8d8d8d" stroke-width="1.6"/>
<line x1="723" y1="993.8" x2="1269.6" y2="993.8" stroke="#8d8d8d" stroke-width="1.6"/>
<path d="M723.00 976.50 L775.20 976.50 L782.20 905.30 L1206.50 905.30 L1209.50 923.30 L1213.60 918.60 L1222.80 918.60 L1229.10 910.50 L1266.30 910.50 L1269.60 920.00" fill="none" stroke="#fdc453" stroke-width="1.15" stroke-linejoin="round" opacity="1"/>
<path d="M723.00 993.80 L775.20 993.80 L782.20 959.20 L1269.60 959.20" fill="none" stroke="#4a66d0" stroke-width="1.15" stroke-linejoin="round" opacity="1"/>
<path d="M723.00 993.50 L1269.60 993.50" fill="none" stroke="#12a39a" stroke-width="2.4" stroke-linejoin="round" opacity="1"/>
</g>
<clipPath id="c24"><rect x="1300" y="300" width="594" height="205"/></clipPath>
<g clip-path="url(#c24)">
<line x1="1345.2" y1="323.60" x2="1880.5" y2="323.60" stroke="#dedede" stroke-width="1" stroke-dasharray="3 3"/>
<line x1="1339.7" y1="323.60" x2="1345.2" y2="323.60" stroke="#8d8d8d" stroke-width="1.3"/>
<text x="1339.2" y="328.10" text-anchor="end" class="ax" style="font-size:12.5px;letter-spacing:0.6px">80k</text>
<line x1="1345.2" y1="356.20" x2="1880.5" y2="356.20" stroke="#dedede" stroke-width="1" stroke-dasharray="3 3"/>
<line x1="1339.7" y1="356.20" x2="1345.2" y2="356.20" stroke="#8d8d8d" stroke-width="1.3"/>
<text x="1339.2" y="360.70" text-anchor="end" class="ax" style="font-size:12.5px;letter-spacing:0.6px">60k</text>
<line x1="1345.2" y1="388.80" x2="1880.5" y2="388.80" stroke="#dedede" stroke-width="1" stroke-dasharray="3 3"/>
<line x1="1339.7" y1="388.80" x2="1345.2" y2="388.80" stroke="#8d8d8d" stroke-width="1.3"/>
<text x="1339.2" y="393.30" text-anchor="end" class="ax" style="font-size:12.5px;letter-spacing:0.6px">40k</text>
<line x1="1345.2" y1="421.40" x2="1880.5" y2="421.40" stroke="#dedede" stroke-width="1" stroke-dasharray="3 3"/>
<line x1="1339.7" y1="421.40" x2="1345.2" y2="421.40" stroke="#8d8d8d" stroke-width="1.3"/>
<text x="1339.2" y="425.90" text-anchor="end" class="ax" style="font-size:12.5px;letter-spacing:0.6px">20k</text>
<line x1="1339.7" y1="454.00" x2="1345.2" y2="454.00" stroke="#8d8d8d" stroke-width="1.3"/>
<text x="1339.2" y="458.50" text-anchor="end" class="ax" style="font-size:12.5px;letter-spacing:0.6px">0</text>
<line x1="1370.9" y1="323.6" x2="1370.9" y2="454" stroke="#dedede" stroke-width="1" stroke-dasharray="3 3"/>
<line x1="1413.9" y1="323.6" x2="1413.9" y2="454" stroke="#dedede" stroke-width="1" stroke-dasharray="3 3"/>
<line x1="1461.4" y1="323.6" x2="1461.4" y2="454" stroke="#dedede" stroke-width="1" stroke-dasharray="3 3"/>
<line x1="1508.2" y1="323.6" x2="1508.2" y2="454" stroke="#dedede" stroke-width="1" stroke-dasharray="3 3"/>
<line x1="1552.5" y1="323.6" x2="1552.5" y2="454" stroke="#dedede" stroke-width="1" stroke-dasharray="3 3"/>
<line x1="1595.5" y1="323.6" x2="1595.5" y2="454" stroke="#dedede" stroke-width="1" stroke-dasharray="3 3"/>
<line x1="1643.3" y1="323.6" x2="1643.3" y2="454" stroke="#dedede" stroke-width="1" stroke-dasharray="3 3"/>
<line x1="1686.6" y1="323.6" x2="1686.6" y2="454" stroke="#dedede" stroke-width="1" stroke-dasharray="3 3"/>
<line x1="1729.9" y1="323.6" x2="1729.9" y2="454" stroke="#dedede" stroke-width="1" stroke-dasharray="3 3"/>
<line x1="1777.4" y1="323.6" x2="1777.4" y2="454" stroke="#dedede" stroke-width="1" stroke-dasharray="3 3"/>
<line x1="1824.9" y1="323.6" x2="1824.9" y2="454" stroke="#dedede" stroke-width="1" stroke-dasharray="3 3"/>
<line x1="1880.5" y1="323.6" x2="1880.5" y2="454" stroke="#dedede" stroke-width="1" stroke-dasharray="3 3"/>
<line x1="1378.5" y1="454" x2="1378.5" y2="459.5" stroke="#8d8d8d" stroke-width="1.3"/>
<text x="1378.5" y="470.20" text-anchor="middle" class="ax">15:52</text>
<line x1="1414" y1="454" x2="1414" y2="459.5" stroke="#8d8d8d" stroke-width="1.3"/>
<text x="1414" y="470.20" text-anchor="middle" class="ax">15:57</text>
<line x1="1449.1" y1="454" x2="1449.1" y2="459.5" stroke="#8d8d8d" stroke-width="1.3"/>
<text x="1449.1" y="470.20" text-anchor="middle" class="ax">16:01</text>
<line x1="1485" y1="454" x2="1485" y2="459.5" stroke="#8d8d8d" stroke-width="1.3"/>
<text x="1485" y="470.20" text-anchor="middle" class="ax">16:06</text>
<line x1="1520.5" y1="454" x2="1520.5" y2="459.5" stroke="#8d8d8d" stroke-width="1.3"/>
<text x="1520.5" y="470.20" text-anchor="middle" class="ax">16:10</text>
<line x1="1556.1" y1="454" x2="1556.1" y2="459.5" stroke="#8d8d8d" stroke-width="1.3"/>
<text x="1556.1" y="470.20" text-anchor="middle" class="ax">16:15</text>
<line x1="1591.5" y1="454" x2="1591.5" y2="459.5" stroke="#8d8d8d" stroke-width="1.3"/>
<text x="1591.5" y="470.20" text-anchor="middle" class="ax">16:19</text>
<line x1="1631.2" y1="454" x2="1631.2" y2="459.5" stroke="#8d8d8d" stroke-width="1.3"/>
<text x="1631.2" y="470.20" text-anchor="middle" class="ax">16:24</text>
<line x1="1670.3" y1="454" x2="1670.3" y2="459.5" stroke="#8d8d8d" stroke-width="1.3"/>
<text x="1670.3" y="470.20" text-anchor="middle" class="ax">16:29</text>
<line x1="1709.8" y1="454" x2="1709.8" y2="459.5" stroke="#8d8d8d" stroke-width="1.3"/>
<text x="1709.8" y="470.20" text-anchor="middle" class="ax">16:34</text>
<line x1="1749.5" y1="454" x2="1749.5" y2="459.5" stroke="#8d8d8d" stroke-width="1.3"/>
<text x="1749.5" y="470.20" text-anchor="middle" class="ax">16:39</text>
<line x1="1788.6" y1="454" x2="1788.6" y2="459.5" stroke="#8d8d8d" stroke-width="1.3"/>
<text x="1788.6" y="470.20" text-anchor="middle" class="ax">16:44</text>
<line x1="1828.3" y1="454" x2="1828.3" y2="459.5" stroke="#8d8d8d" stroke-width="1.3"/>
<text x="1828.3" y="470.20" text-anchor="middle" class="ax">16:50</text>
<line x1="1880" y1="454" x2="1880" y2="459.5" stroke="#8d8d8d" stroke-width="1.3"/>
<text x="1880.5" y="470.20" text-anchor="end" class="ax">16:57</text>
<rect x="1347.00" y="343.60" width="1.4" height="110.40" fill="#fed990" opacity="1"/>
<rect x="1350.94" y="343.60" width="1.4" height="110.40" fill="#fed990" opacity="1"/>
<rect x="1354.88" y="343.60" width="1.4" height="110.40" fill="#fed990" opacity="1"/>
<rect x="1358.82" y="343.60" width="1.4" height="110.40" fill="#fed990" opacity="1"/>
<rect x="1362.76" y="343.60" width="1.4" height="110.40" fill="#fed990" opacity="1"/>
<rect x="1366.70" y="343.60" width="1.4" height="110.40" fill="#fed990" opacity="1"/>
<rect x="1370.64" y="343.60" width="1.4" height="110.40" fill="#fed990" opacity="1"/>
<rect x="1374.58" y="343.60" width="1.4" height="110.40" fill="#fed990" opacity="1"/>
<rect x="1378.52" y="343.60" width="1.4" height="110.40" fill="#fed990" opacity="1"/>
<rect x="1382.46" y="343.60" width="1.4" height="110.40" fill="#fed990" opacity="1"/>
<rect x="1386.40" y="343.60" width="1.4" height="110.40" fill="#fed990" opacity="1"/>
<rect x="1390.34" y="343.60" width="1.4" height="110.40" fill="#fed990" opacity="1"/>
<rect x="1394.28" y="343.60" width="1.4" height="110.40" fill="#fed990" opacity="1"/>
<rect x="1398.22" y="343.60" width="1.4" height="110.40" fill="#fed990" opacity="1"/>
<rect x="1402.16" y="398.70" width="1.4" height="55.30" fill="#fed990" opacity="1"/>
<rect x="1405.20" y="439.10" width="1.0" height="14.90" fill="#5574d2" opacity="1"/>
<rect x="1406.30" y="427.00" width="1.0" height="27.00" fill="#fec455" opacity="1"/>
<rect x="1409.15" y="439.10" width="1.0" height="14.90" fill="#5574d2" opacity="1"/>
<rect x="1410.25" y="427.00" width="1.0" height="27.00" fill="#fec455" opacity="1"/>
<rect x="1413.11" y="439.10" width="1.0" height="14.90" fill="#5574d2" opacity="1"/>
<rect x="1414.21" y="427.00" width="1.0" height="27.00" fill="#fec455" opacity="1"/>
<rect x="1417.07" y="439.10" width="1.0" height="14.90" fill="#5574d2" opacity="1"/>
<rect x="1418.16" y="427.00" width="1.0" height="27.00" fill="#fec455" opacity="1"/>
<rect x="1421.02" y="439.10" width="1.0" height="14.90" fill="#5574d2" opacity="1"/>
<rect x="1422.12" y="427.00" width="1.0" height="27.00" fill="#fec455" opacity="1"/>
<rect x="1424.98" y="439.10" width="1.0" height="14.90" fill="#5574d2" opacity="1"/>
<rect x="1426.08" y="427.00" width="1.0" height="27.00" fill="#fec455" opacity="1"/>
<rect x="1428.93" y="439.10" width="1.0" height="14.90" fill="#5574d2" opacity="1"/>
<rect x="1430.03" y="427.00" width="1.0" height="27.00" fill="#fec455" opacity="1"/>
<rect x="1432.88" y="439.10" width="1.0" height="14.90" fill="#5574d2" opacity="1"/>
<rect x="1433.98" y="427.00" width="1.0" height="27.00" fill="#fec455" opacity="1"/>
<rect x="1436.84" y="439.10" width="1.0" height="14.90" fill="#5574d2" opacity="1"/>
<rect x="1437.94" y="427.00" width="1.0" height="27.00" fill="#fec455" opacity="1"/>
<rect x="1440.80" y="439.10" width="1.0" height="14.90" fill="#5574d2" opacity="1"/>
<rect x="1441.89" y="427.00" width="1.0" height="27.00" fill="#fec455" opacity="1"/>
<rect x="1444.75" y="439.10" width="1.0" height="14.90" fill="#5574d2" opacity="1"/>
<rect x="1445.85" y="427.00" width="1.0" height="27.00" fill="#fec455" opacity="1"/>
<rect x="1448.71" y="439.10" width="1.0" height="14.90" fill="#5574d2" opacity="1"/>
<rect x="1449.81" y="427.00" width="1.0" height="27.00" fill="#fec455" opacity="1"/>
<rect x="1452.66" y="439.10" width="1.0" height="14.90" fill="#5574d2" opacity="1"/>
<rect x="1453.76" y="427.00" width="1.0" height="27.00" fill="#fec455" opacity="1"/>
<rect x="1456.62" y="439.10" width="1.0" height="14.90" fill="#5574d2" opacity="1"/>
<rect x="1457.71" y="427.00" width="1.0" height="27.00" fill="#fec455" opacity="1"/>
<rect x="1460.57" y="439.10" width="1.0" height="14.90" fill="#5574d2" opacity="1"/>
<rect x="1461.67" y="427.00" width="1.0" height="27.00" fill="#fec455" opacity="1"/>
<rect x="1464.53" y="439.10" width="1.0" height="14.90" fill="#5574d2" opacity="1"/>
<rect x="1465.62" y="427.00" width="1.0" height="27.00" fill="#fec455" opacity="1"/>
<rect x="1468.48" y="439.10" width="1.0" height="14.90" fill="#5574d2" opacity="1"/>
<rect x="1469.58" y="427.00" width="1.0" height="27.00" fill="#fec455" opacity="1"/>
<rect x="1472.43" y="439.10" width="1.0" height="14.90" fill="#5574d2" opacity="1"/>
<rect x="1473.53" y="427.00" width="1.0" height="27.00" fill="#fec455" opacity="1"/>
<rect x="1476.39" y="439.10" width="1.0" height="14.90" fill="#5574d2" opacity="1"/>
<rect x="1477.49" y="427.00" width="1.0" height="27.00" fill="#fec455" opacity="1"/>
<rect x="1480.35" y="439.10" width="1.0" height="14.90" fill="#5574d2" opacity="1"/>
<rect x="1481.44" y="427.00" width="1.0" height="27.00" fill="#fec455" opacity="1"/>
<rect x="1484.30" y="439.10" width="1.0" height="14.90" fill="#5574d2" opacity="1"/>
<rect x="1485.40" y="427.00" width="1.0" height="27.00" fill="#fec455" opacity="1"/>
<rect x="1488.26" y="439.10" width="1.0" height="14.90" fill="#5574d2" opacity="1"/>
<rect x="1489.36" y="427.00" width="1.0" height="27.00" fill="#fec455" opacity="1"/>
<rect x="1492.21" y="439.10" width="1.0" height="14.90" fill="#5574d2" opacity="1"/>
<rect x="1493.31" y="427.00" width="1.0" height="27.00" fill="#fec455" opacity="1"/>
<rect x="1496.16" y="439.10" width="1.0" height="14.90" fill="#5574d2" opacity="1"/>
<rect x="1497.26" y="427.00" width="1.0" height="27.00" fill="#fec455" opacity="1"/>
<rect x="1500.12" y="439.10" width="1.0" height="14.90" fill="#5574d2" opacity="1"/>
<rect x="1501.22" y="427.00" width="1.0" height="27.00" fill="#fec455" opacity="1"/>
<rect x="1504.08" y="439.10" width="1.0" height="14.90" fill="#5574d2" opacity="1"/>
<rect x="1505.17" y="427.00" width="1.0" height="27.00" fill="#fec455" opacity="1"/>
<rect x="1508.03" y="439.10" width="1.0" height="14.90" fill="#5574d2" opacity="1"/>
<rect x="1509.13" y="427.00" width="1.0" height="27.00" fill="#fec455" opacity="1"/>
<rect x="1511.99" y="439.10" width="1.0" height="14.90" fill="#5574d2" opacity="1"/>
<rect x="1513.09" y="427.00" width="1.0" height="27.00" fill="#fec455" opacity="1"/>
<rect x="1515.94" y="439.10" width="1.0" height="14.90" fill="#5574d2" opacity="1"/>
<rect x="1517.04" y="427.00" width="1.0" height="27.00" fill="#fec455" opacity="1"/>
<rect x="1519.89" y="439.10" width="1.0" height="14.90" fill="#5574d2" opacity="1"/>
<rect x="1520.99" y="427.00" width="1.0" height="27.00" fill="#fec455" opacity="1"/>
<rect x="1523.85" y="439.10" width="1.0" height="14.90" fill="#5574d2" opacity="1"/>
<rect x="1524.95" y="427.00" width="1.0" height="27.00" fill="#fec455" opacity="1"/>
<rect x="1527.81" y="439.10" width="1.0" height="14.90" fill="#5574d2" opacity="1"/>
<rect x="1528.90" y="427.00" width="1.0" height="27.00" fill="#fec455" opacity="1"/>
<rect x="1531.76" y="439.10" width="1.0" height="14.90" fill="#5574d2" opacity="1"/>
<rect x="1532.86" y="427.00" width="1.0" height="27.00" fill="#fec455" opacity="1"/>
<rect x="1535.72" y="439.10" width="1.0" height="14.90" fill="#5574d2" opacity="1"/>
<rect x="1536.82" y="427.00" width="1.0" height="27.00" fill="#fec455" opacity="1"/>
<rect x="1539.67" y="439.10" width="1.0" height="14.90" fill="#5574d2" opacity="1"/>
<rect x="1540.77" y="427.00" width="1.0" height="27.00" fill="#fec455" opacity="1"/>
<rect x="1543.62" y="439.10" width="1.0" height="14.90" fill="#5574d2" opacity="1"/>
<rect x="1544.72" y="427.00" width="1.0" height="27.00" fill="#fec455" opacity="1"/>
<rect x="1547.58" y="439.10" width="1.0" height="14.90" fill="#5574d2" opacity="1"/>
<rect x="1548.68" y="427.00" width="1.0" height="27.00" fill="#fec455" opacity="1"/>
<rect x="1551.54" y="439.10" width="1.0" height="14.90" fill="#5574d2" opacity="1"/>
<rect x="1552.63" y="427.00" width="1.0" height="27.00" fill="#fec455" opacity="1"/>
<rect x="1555.49" y="439.10" width="1.0" height="14.90" fill="#5574d2" opacity="1"/>
<rect x="1556.59" y="427.00" width="1.0" height="27.00" fill="#fec455" opacity="1"/>
<rect x="1559.45" y="439.10" width="1.0" height="14.90" fill="#5574d2" opacity="1"/>
<rect x="1560.55" y="427.00" width="1.0" height="27.00" fill="#fec455" opacity="1"/>
<rect x="1563.40" y="439.10" width="1.0" height="14.90" fill="#5574d2" opacity="1"/>
<rect x="1564.50" y="427.00" width="1.0" height="27.00" fill="#fec455" opacity="1"/>
<rect x="1567.36" y="439.10" width="1.0" height="14.90" fill="#5574d2" opacity="1"/>
<rect x="1568.45" y="427.00" width="1.0" height="27.00" fill="#fec455" opacity="1"/>
<rect x="1571.31" y="439.10" width="1.0" height="14.90" fill="#5574d2" opacity="1"/>
<rect x="1572.41" y="427.00" width="1.0" height="27.00" fill="#fec455" opacity="1"/>
<rect x="1575.27" y="439.10" width="1.0" height="14.90" fill="#5574d2" opacity="1"/>
<rect x="1576.37" y="427.00" width="1.0" height="27.00" fill="#fec455" opacity="1"/>
<rect x="1579.22" y="439.10" width="1.0" height="14.90" fill="#5574d2" opacity="1"/>
<rect x="1580.32" y="427.00" width="1.0" height="27.00" fill="#fec455" opacity="1"/>
<rect x="1583.17" y="439.10" width="1.0" height="14.90" fill="#5574d2" opacity="1"/>
<rect x="1584.27" y="427.00" width="1.0" height="27.00" fill="#fec455" opacity="1"/>
<rect x="1587.13" y="439.10" width="1.0" height="14.90" fill="#5574d2" opacity="1"/>
<rect x="1588.23" y="427.00" width="1.0" height="27.00" fill="#fec455" opacity="1"/>
<rect x="1591.09" y="439.10" width="1.0" height="14.90" fill="#5574d2" opacity="1"/>
<rect x="1592.18" y="427.00" width="1.0" height="27.00" fill="#fec455" opacity="1"/>
<rect x="1595.04" y="439.10" width="1.0" height="14.90" fill="#5574d2" opacity="1"/>
<rect x="1596.14" y="427.00" width="1.0" height="27.00" fill="#fec455" opacity="1"/>
<rect x="1599.00" y="439.10" width="1.0" height="14.90" fill="#5574d2" opacity="1"/>
<rect x="1600.10" y="427.00" width="1.0" height="27.00" fill="#fec455" opacity="1"/>
<rect x="1602.95" y="439.10" width="1.0" height="14.90" fill="#5574d2" opacity="1"/>
<rect x="1604.05" y="427.00" width="1.0" height="27.00" fill="#fec455" opacity="1"/>
<rect x="1606.90" y="439.10" width="1.0" height="14.90" fill="#5574d2" opacity="1"/>
<rect x="1608.00" y="427.00" width="1.0" height="27.00" fill="#fec455" opacity="1"/>
<rect x="1610.86" y="439.10" width="1.0" height="14.90" fill="#5574d2" opacity="1"/>
<rect x="1611.96" y="427.00" width="1.0" height="27.00" fill="#fec455" opacity="1"/>
<rect x="1614.82" y="439.10" width="1.0" height="14.90" fill="#5574d2" opacity="1"/>
<rect x="1615.91" y="427.00" width="1.0" height="27.00" fill="#fec455" opacity="1"/>
<rect x="1618.77" y="439.10" width="1.0" height="14.90" fill="#5574d2" opacity="1"/>
<rect x="1619.87" y="427.00" width="1.0" height="27.00" fill="#fec455" opacity="1"/>
<rect x="1622.73" y="439.10" width="1.0" height="14.90" fill="#5574d2" opacity="1"/>
<rect x="1623.83" y="427.00" width="1.0" height="27.00" fill="#fec455" opacity="1"/>
<rect x="1626.68" y="439.10" width="1.0" height="14.90" fill="#5574d2" opacity="1"/>
<rect x="1627.78" y="427.00" width="1.0" height="27.00" fill="#fec455" opacity="1"/>
<rect x="1630.63" y="439.10" width="1.0" height="14.90" fill="#5574d2" opacity="1"/>
<rect x="1631.73" y="427.00" width="1.0" height="27.00" fill="#fec455" opacity="1"/>
<rect x="1634.59" y="439.10" width="1.0" height="14.90" fill="#5574d2" opacity="1"/>
<rect x="1635.69" y="427.00" width="1.0" height="27.00" fill="#fec455" opacity="1"/>
<rect x="1638.55" y="439.10" width="1.0" height="14.90" fill="#5574d2" opacity="1"/>
<rect x="1639.64" y="427.00" width="1.0" height="27.00" fill="#fec455" opacity="1"/>
<rect x="1642.50" y="439.10" width="1.0" height="14.90" fill="#5574d2" opacity="1"/>
<rect x="1643.60" y="427.00" width="1.0" height="27.00" fill="#fec455" opacity="1"/>
<rect x="1646.45" y="439.10" width="1.0" height="14.90" fill="#5574d2" opacity="1"/>
<rect x="1647.55" y="427.00" width="1.0" height="27.00" fill="#fec455" opacity="1"/>
<rect x="1650.41" y="439.10" width="1.0" height="14.90" fill="#5574d2" opacity="1"/>
<rect x="1651.51" y="427.00" width="1.0" height="27.00" fill="#fec455" opacity="1"/>
<rect x="1654.37" y="439.10" width="1.0" height="14.90" fill="#5574d2" opacity="1"/>
<rect x="1655.46" y="427.00" width="1.0" height="27.00" fill="#fec455" opacity="1"/>
<rect x="1658.32" y="439.10" width="1.0" height="14.90" fill="#5574d2" opacity="1"/>
<rect x="1659.42" y="427.00" width="1.0" height="27.00" fill="#fec455" opacity="1"/>
<rect x="1662.28" y="439.10" width="1.0" height="14.90" fill="#5574d2" opacity="1"/>
<rect x="1663.38" y="427.00" width="1.0" height="27.00" fill="#fec455" opacity="1"/>
<rect x="1666.23" y="439.10" width="1.0" height="14.90" fill="#5574d2" opacity="1"/>
<rect x="1667.33" y="427.00" width="1.0" height="27.00" fill="#fec455" opacity="1"/>
<rect x="1670.18" y="439.10" width="1.0" height="14.90" fill="#5574d2" opacity="1"/>
<rect x="1671.28" y="427.00" width="1.0" height="27.00" fill="#fec455" opacity="1"/>
<rect x="1674.14" y="439.10" width="1.0" height="14.90" fill="#5574d2" opacity="1"/>
<rect x="1675.24" y="427.00" width="1.0" height="27.00" fill="#fec455" opacity="1"/>
<rect x="1678.10" y="439.10" width="1.0" height="14.90" fill="#5574d2" opacity="1"/>
<rect x="1679.19" y="427.00" width="1.0" height="27.00" fill="#fec455" opacity="1"/>
<rect x="1682.05" y="439.10" width="1.0" height="14.90" fill="#5574d2" opacity="1"/>
<rect x="1683.15" y="427.00" width="1.0" height="27.00" fill="#fec455" opacity="1"/>
<rect x="1686.01" y="439.10" width="1.0" height="14.90" fill="#5574d2" opacity="1"/>
<rect x="1687.11" y="427.00" width="1.0" height="27.00" fill="#fec455" opacity="1"/>
<rect x="1689.96" y="439.10" width="1.0" height="14.90" fill="#5574d2" opacity="1"/>
<rect x="1691.06" y="427.00" width="1.0" height="27.00" fill="#fec455" opacity="1"/>
<rect x="1693.91" y="439.10" width="1.0" height="14.90" fill="#5574d2" opacity="1"/>
<rect x="1695.01" y="427.00" width="1.0" height="27.00" fill="#fec455" opacity="1"/>
<rect x="1697.87" y="439.10" width="1.0" height="14.90" fill="#5574d2" opacity="1"/>
<rect x="1698.97" y="427.00" width="1.0" height="27.00" fill="#fec455" opacity="1"/>
<rect x="1701.83" y="439.10" width="1.0" height="14.90" fill="#5574d2" opacity="1"/>
<rect x="1702.92" y="427.00" width="1.0" height="27.00" fill="#fec455" opacity="1"/>
<rect x="1705.78" y="439.10" width="1.0" height="14.90" fill="#5574d2" opacity="1"/>
<rect x="1706.88" y="427.00" width="1.0" height="27.00" fill="#fec455" opacity="1"/>
<rect x="1709.74" y="439.10" width="1.0" height="14.90" fill="#5574d2" opacity="1"/>
<rect x="1710.84" y="427.00" width="1.0" height="27.00" fill="#fec455" opacity="1"/>
<rect x="1713.69" y="439.10" width="1.0" height="14.90" fill="#5574d2" opacity="1"/>
<rect x="1714.79" y="427.00" width="1.0" height="27.00" fill="#fec455" opacity="1"/>
<rect x="1717.64" y="439.10" width="1.0" height="14.90" fill="#5574d2" opacity="1"/>
<rect x="1718.74" y="427.00" width="1.0" height="27.00" fill="#fec455" opacity="1"/>
<rect x="1721.60" y="439.10" width="1.0" height="14.90" fill="#5574d2" opacity="1"/>
<rect x="1722.70" y="427.00" width="1.0" height="27.00" fill="#fec455" opacity="1"/>
<rect x="1725.56" y="439.10" width="1.0" height="14.90" fill="#5574d2" opacity="1"/>
<rect x="1726.65" y="427.00" width="1.0" height="27.00" fill="#fec455" opacity="1"/>
<rect x="1729.51" y="439.10" width="1.0" height="14.90" fill="#5574d2" opacity="1"/>
<rect x="1730.61" y="427.00" width="1.0" height="27.00" fill="#fec455" opacity="1"/>
<rect x="1733.47" y="439.10" width="1.0" height="14.90" fill="#5574d2" opacity="1"/>
<rect x="1734.57" y="427.00" width="1.0" height="27.00" fill="#fec455" opacity="1"/>
<rect x="1737.42" y="439.10" width="1.0" height="14.90" fill="#5574d2" opacity="1"/>
<rect x="1738.52" y="427.00" width="1.0" height="27.00" fill="#fec455" opacity="1"/>
<rect x="1741.38" y="439.10" width="1.0" height="14.90" fill="#5574d2" opacity="1"/>
<rect x="1742.47" y="427.00" width="1.0" height="27.00" fill="#fec455" opacity="1"/>
<rect x="1745.33" y="439.10" width="1.0" height="14.90" fill="#5574d2" opacity="1"/>
<rect x="1746.43" y="427.00" width="1.0" height="27.00" fill="#fec455" opacity="1"/>
<rect x="1749.29" y="439.10" width="1.0" height="14.90" fill="#5574d2" opacity="1"/>
<rect x="1750.38" y="427.00" width="1.0" height="27.00" fill="#fec455" opacity="1"/>
<rect x="1753.24" y="439.10" width="1.0" height="14.90" fill="#5574d2" opacity="1"/>
<rect x="1754.34" y="427.00" width="1.0" height="27.00" fill="#fec455" opacity="1"/>
<rect x="1757.20" y="439.10" width="1.0" height="14.90" fill="#5574d2" opacity="1"/>
<rect x="1758.30" y="427.00" width="1.0" height="27.00" fill="#fec455" opacity="1"/>
<rect x="1761.15" y="439.10" width="1.0" height="14.90" fill="#5574d2" opacity="1"/>
<rect x="1762.25" y="427.00" width="1.0" height="27.00" fill="#fec455" opacity="1"/>
<rect x="1765.11" y="439.10" width="1.0" height="14.90" fill="#5574d2" opacity="1"/>
<rect x="1766.20" y="427.00" width="1.0" height="27.00" fill="#fec455" opacity="1"/>
<rect x="1769.06" y="439.10" width="1.0" height="14.90" fill="#5574d2" opacity="1"/>
<rect x="1770.16" y="427.00" width="1.0" height="27.00" fill="#fec455" opacity="1"/>
<rect x="1773.02" y="439.10" width="1.0" height="14.90" fill="#5574d2" opacity="1"/>
<rect x="1774.12" y="427.00" width="1.0" height="27.00" fill="#fec455" opacity="1"/>
<rect x="1776.97" y="439.10" width="1.0" height="14.90" fill="#5574d2" opacity="1"/>
<rect x="1778.07" y="427.00" width="1.0" height="27.00" fill="#fec455" opacity="1"/>
<rect x="1780.93" y="439.10" width="1.0" height="14.90" fill="#5574d2" opacity="1"/>
<rect x="1782.03" y="427.00" width="1.0" height="27.00" fill="#fec455" opacity="1"/>
<rect x="1784.88" y="439.10" width="1.0" height="14.90" fill="#5574d2" opacity="1"/>
<rect x="1785.98" y="427.00" width="1.0" height="27.00" fill="#fec455" opacity="1"/>
<rect x="1788.84" y="439.10" width="1.0" height="14.90" fill="#5574d2" opacity="1"/>
<rect x="1789.93" y="427.00" width="1.0" height="27.00" fill="#fec455" opacity="1"/>
<rect x="1792.79" y="439.10" width="1.0" height="14.90" fill="#5574d2" opacity="1"/>
<rect x="1793.89" y="427.00" width="1.0" height="27.00" fill="#fec455" opacity="1"/>
<rect x="1796.75" y="439.10" width="1.0" height="14.90" fill="#5574d2" opacity="1"/>
<rect x="1797.85" y="427.00" width="1.0" height="27.00" fill="#fec455" opacity="1"/>
<rect x="1800.70" y="439.10" width="1.0" height="14.90" fill="#5574d2" opacity="1"/>
<rect x="1801.80" y="427.00" width="1.0" height="27.00" fill="#fec455" opacity="1"/>
<rect x="1804.65" y="439.10" width="1.0" height="14.90" fill="#5574d2" opacity="1"/>
<rect x="1805.75" y="427.00" width="1.0" height="27.00" fill="#fec455" opacity="1"/>
<rect x="1808.61" y="439.10" width="1.0" height="14.90" fill="#5574d2" opacity="1"/>
<rect x="1809.71" y="427.00" width="1.0" height="27.00" fill="#fec455" opacity="1"/>
<rect x="1812.57" y="439.10" width="1.0" height="14.90" fill="#5574d2" opacity="1"/>
<rect x="1813.66" y="427.00" width="1.0" height="27.00" fill="#fec455" opacity="1"/>
<rect x="1816.52" y="439.10" width="1.0" height="14.90" fill="#5574d2" opacity="1"/>
<rect x="1817.62" y="427.00" width="1.0" height="27.00" fill="#fec455" opacity="1"/>
<rect x="1820.48" y="439.10" width="1.0" height="14.90" fill="#5574d2" opacity="1"/>
<rect x="1821.58" y="429.80" width="1.0" height="24.20" fill="#fec455" opacity="1"/>
<rect x="1824.43" y="439.10" width="1.0" height="14.90" fill="#5574d2" opacity="1"/>
<rect x="1825.53" y="429.80" width="1.0" height="24.20" fill="#fec455" opacity="1"/>
<rect x="1828.38" y="439.10" width="1.0" height="14.90" fill="#5574d2" opacity="1"/>
<rect x="1829.48" y="429.80" width="1.0" height="24.20" fill="#fec455" opacity="1"/>
<rect x="1832.34" y="439.10" width="1.0" height="14.90" fill="#5574d2" opacity="1"/>
<rect x="1833.44" y="429.80" width="1.0" height="24.20" fill="#fec455" opacity="1"/>
<rect x="1836.30" y="439.10" width="1.0" height="14.90" fill="#5574d2" opacity="1"/>
<rect x="1837.39" y="427.90" width="1.0" height="26.10" fill="#fec455" opacity="1"/>
<rect x="1840.25" y="439.10" width="1.0" height="14.90" fill="#5574d2" opacity="1"/>
<rect x="1841.35" y="427.90" width="1.0" height="26.10" fill="#fec455" opacity="1"/>
<rect x="1844.20" y="439.10" width="1.0" height="14.90" fill="#5574d2" opacity="1"/>
<rect x="1845.30" y="427.90" width="1.0" height="26.10" fill="#fec455" opacity="1"/>
<rect x="1848.16" y="439.10" width="1.0" height="14.90" fill="#5574d2" opacity="1"/>
<rect x="1849.26" y="427.90" width="1.0" height="26.10" fill="#fec455" opacity="1"/>
<rect x="1852.12" y="439.10" width="1.0" height="14.90" fill="#5574d2" opacity="1"/>
<rect x="1853.21" y="427.90" width="1.0" height="26.10" fill="#fec455" opacity="1"/>
<rect x="1856.07" y="439.10" width="1.0" height="14.90" fill="#5574d2" opacity="1"/>
<rect x="1857.17" y="427.90" width="1.0" height="26.10" fill="#fec455" opacity="1"/>
<rect x="1860.03" y="439.10" width="1.0" height="14.90" fill="#5574d2" opacity="1"/>
<rect x="1861.12" y="427.90" width="1.0" height="26.10" fill="#fec455" opacity="1"/>
<rect x="1863.98" y="439.10" width="1.0" height="14.90" fill="#5574d2" opacity="1"/>
<rect x="1865.08" y="427.90" width="1.0" height="26.10" fill="#fec455" opacity="1"/>
<rect x="1867.93" y="439.10" width="1.0" height="14.90" fill="#5574d2" opacity="1"/>
<rect x="1869.03" y="427.90" width="1.0" height="26.10" fill="#fec455" opacity="1"/>
<rect x="1871.89" y="439.10" width="1.0" height="14.90" fill="#5574d2" opacity="1"/>
<rect x="1872.99" y="427.90" width="1.0" height="26.10" fill="#fec455" opacity="1"/>
<rect x="1875.85" y="439.10" width="1.0" height="14.90" fill="#5574d2" opacity="1"/>
<rect x="1876.94" y="427.90" width="1.0" height="26.10" fill="#fec455" opacity="1"/>
<rect x="1879.80" y="439.10" width="1.0" height="14.90" fill="#5574d2" opacity="1"/>
<rect x="1880.90" y="429.90" width="1.0" height="24.10" fill="#fec455" opacity="1"/>
<line x1="1345.2" y1="323.6" x2="1345.2" y2="454" stroke="#8d8d8d" stroke-width="1.6"/>
<line x1="1345.2" y1="454" x2="1880.5" y2="454" stroke="#8d8d8d" stroke-width="1.6"/>
</g>
<clipPath id="c34"><rect x="1300" y="570" width="594" height="205"/></clipPath>
<g clip-path="url(#c34)">
<line x1="1345.2" y1="593.60" x2="1880.5" y2="593.60" stroke="#dedede" stroke-width="1" stroke-dasharray="3 3"/>
<line x1="1339.7" y1="593.60" x2="1345.2" y2="593.60" stroke="#8d8d8d" stroke-width="1.3"/>
<text x="1339.2" y="598.10" text-anchor="end" class="ax" style="font-size:12.5px;letter-spacing:0.6px">80k</text>
<line x1="1345.2" y1="626.15" x2="1880.5" y2="626.15" stroke="#dedede" stroke-width="1" stroke-dasharray="3 3"/>
<line x1="1339.7" y1="626.15" x2="1345.2" y2="626.15" stroke="#8d8d8d" stroke-width="1.3"/>
<text x="1339.2" y="630.65" text-anchor="end" class="ax" style="font-size:12.5px;letter-spacing:0.6px">60k</text>
<line x1="1345.2" y1="658.70" x2="1880.5" y2="658.70" stroke="#dedede" stroke-width="1" stroke-dasharray="3 3"/>
<line x1="1339.7" y1="658.70" x2="1345.2" y2="658.70" stroke="#8d8d8d" stroke-width="1.3"/>
<text x="1339.2" y="663.20" text-anchor="end" class="ax" style="font-size:12.5px;letter-spacing:0.6px">40k</text>
<line x1="1345.2" y1="691.25" x2="1880.5" y2="691.25" stroke="#dedede" stroke-width="1" stroke-dasharray="3 3"/>
<line x1="1339.7" y1="691.25" x2="1345.2" y2="691.25" stroke="#8d8d8d" stroke-width="1.3"/>
<text x="1339.2" y="695.75" text-anchor="end" class="ax" style="font-size:12.5px;letter-spacing:0.6px">20k</text>
<line x1="1339.7" y1="723.80" x2="1345.2" y2="723.80" stroke="#8d8d8d" stroke-width="1.3"/>
<text x="1339.2" y="728.30" text-anchor="end" class="ax" style="font-size:12.5px;letter-spacing:0.6px">0</text>
<line x1="1358.1" y1="593.6" x2="1358.1" y2="723.8" stroke="#dedede" stroke-width="1" stroke-dasharray="3 3"/>
<line x1="1405.2" y1="593.6" x2="1405.2" y2="723.8" stroke="#dedede" stroke-width="1" stroke-dasharray="3 3"/>
<line x1="1451.8" y1="593.6" x2="1451.8" y2="723.8" stroke="#dedede" stroke-width="1" stroke-dasharray="3 3"/>
<line x1="1498.5" y1="593.6" x2="1498.5" y2="723.8" stroke="#dedede" stroke-width="1" stroke-dasharray="3 3"/>
<line x1="1545" y1="593.6" x2="1545" y2="723.8" stroke="#dedede" stroke-width="1" stroke-dasharray="3 3"/>
<line x1="1592.1" y1="593.6" x2="1592.1" y2="723.8" stroke="#dedede" stroke-width="1" stroke-dasharray="3 3"/>
<line x1="1638.4" y1="593.6" x2="1638.4" y2="723.8" stroke="#dedede" stroke-width="1" stroke-dasharray="3 3"/>
<line x1="1685.4" y1="593.6" x2="1685.4" y2="723.8" stroke="#dedede" stroke-width="1" stroke-dasharray="3 3"/>
<line x1="1732" y1="593.6" x2="1732" y2="723.8" stroke="#dedede" stroke-width="1" stroke-dasharray="3 3"/>
<line x1="1779" y1="593.6" x2="1779" y2="723.8" stroke="#dedede" stroke-width="1" stroke-dasharray="3 3"/>
<line x1="1825.5" y1="593.6" x2="1825.5" y2="723.8" stroke="#dedede" stroke-width="1" stroke-dasharray="3 3"/>
<line x1="1881" y1="593.6" x2="1881" y2="723.8" stroke="#dedede" stroke-width="1" stroke-dasharray="3 3"/>
<line x1="1374.3" y1="723.8" x2="1374.3" y2="729.3" stroke="#8d8d8d" stroke-width="1.3"/>
<text x="1374.3" y="740.00" text-anchor="middle" class="ax">15:52</text>
<line x1="1413.2" y1="723.8" x2="1413.2" y2="729.3" stroke="#8d8d8d" stroke-width="1.3"/>
<text x="1413.2" y="740.00" text-anchor="middle" class="ax">15:57</text>
<line x1="1448.4" y1="723.8" x2="1448.4" y2="729.3" stroke="#8d8d8d" stroke-width="1.3"/>
<text x="1448.4" y="740.00" text-anchor="middle" class="ax">16:01</text>
<line x1="1487" y1="723.8" x2="1487" y2="729.3" stroke="#8d8d8d" stroke-width="1.3"/>
<text x="1487" y="740.00" text-anchor="middle" class="ax">16:06</text>
<line x1="1522" y1="723.8" x2="1522" y2="729.3" stroke="#8d8d8d" stroke-width="1.3"/>
<text x="1522" y="740.00" text-anchor="middle" class="ax">16:11</text>
<line x1="1556.8" y1="723.8" x2="1556.8" y2="729.3" stroke="#8d8d8d" stroke-width="1.3"/>
<text x="1556.8" y="740.00" text-anchor="middle" class="ax">16:15</text>
<line x1="1596" y1="723.8" x2="1596" y2="729.3" stroke="#8d8d8d" stroke-width="1.3"/>
<text x="1596" y="740.00" text-anchor="middle" class="ax">16:20</text>
<line x1="1634.7" y1="723.8" x2="1634.7" y2="729.3" stroke="#8d8d8d" stroke-width="1.3"/>
<text x="1634.7" y="740.00" text-anchor="middle" class="ax">16:25</text>
<line x1="1673.6" y1="723.8" x2="1673.6" y2="729.3" stroke="#8d8d8d" stroke-width="1.3"/>
<text x="1673.6" y="740.00" text-anchor="middle" class="ax">16:30</text>
<line x1="1712.3" y1="723.8" x2="1712.3" y2="729.3" stroke="#8d8d8d" stroke-width="1.3"/>
<text x="1712.3" y="740.00" text-anchor="middle" class="ax">16:35</text>
<line x1="1751.5" y1="723.8" x2="1751.5" y2="729.3" stroke="#8d8d8d" stroke-width="1.3"/>
<text x="1751.5" y="740.00" text-anchor="middle" class="ax">16:40</text>
<line x1="1790.2" y1="723.8" x2="1790.2" y2="729.3" stroke="#8d8d8d" stroke-width="1.3"/>
<text x="1790.2" y="740.00" text-anchor="middle" class="ax">16:45</text>
<line x1="1829.2" y1="723.8" x2="1829.2" y2="729.3" stroke="#8d8d8d" stroke-width="1.3"/>
<text x="1829.2" y="740.00" text-anchor="middle" class="ax">16:50</text>
<line x1="1880.4" y1="723.8" x2="1880.4" y2="729.3" stroke="#8d8d8d" stroke-width="1.3"/>
<text x="1880.9" y="740.00" text-anchor="end" class="ax">16:57</text>
<rect x="1346.00" y="613.80" width="1.0" height="110.00" fill="#6a84d8" opacity="1"/>
<rect x="1349.89" y="613.80" width="1.0" height="110.00" fill="#6a84d8" opacity="1"/>
<rect x="1353.79" y="613.80" width="1.0" height="110.00" fill="#6a84d8" opacity="1"/>
<rect x="1357.68" y="613.80" width="1.0" height="110.00" fill="#6a84d8" opacity="1"/>
<rect x="1361.57" y="613.80" width="1.0" height="110.00" fill="#6a84d8" opacity="1"/>
<rect x="1365.46" y="613.80" width="1.0" height="110.00" fill="#6a84d8" opacity="1"/>
<rect x="1369.36" y="613.80" width="1.0" height="110.00" fill="#6a84d8" opacity="1"/>
<rect x="1373.25" y="613.80" width="1.0" height="110.00" fill="#6a84d8" opacity="1"/>
<rect x="1377.14" y="613.80" width="1.0" height="110.00" fill="#6a84d8" opacity="1"/>
<rect x="1381.04" y="613.80" width="1.0" height="110.00" fill="#6a84d8" opacity="1"/>
<rect x="1384.93" y="613.80" width="1.0" height="110.00" fill="#6a84d8" opacity="1"/>
<rect x="1388.82" y="613.80" width="1.0" height="110.00" fill="#6a84d8" opacity="1"/>
<rect x="1392.72" y="613.80" width="1.0" height="110.00" fill="#6a84d8" opacity="1"/>
<rect x="1396.61" y="613.80" width="1.0" height="110.00" fill="#6a84d8" opacity="1"/>
<rect x="1400.50" y="613.80" width="1.0" height="110.00" fill="#6a84d8" opacity="1"/>
<rect x="1403.39" y="694.40" width="1.0" height="29.40" fill="#1d9fc0" opacity="1"/>
<rect x="1404.39" y="668.90" width="1.0" height="54.90" fill="#5f7bd8" opacity="1"/>
<rect x="1407.29" y="694.40" width="1.0" height="29.40" fill="#1d9fc0" opacity="1"/>
<rect x="1408.29" y="668.90" width="1.0" height="54.90" fill="#5f7bd8" opacity="1"/>
<rect x="1411.18" y="694.40" width="1.0" height="29.40" fill="#1d9fc0" opacity="1"/>
<rect x="1412.18" y="668.90" width="1.0" height="54.90" fill="#5f7bd8" opacity="1"/>
<rect x="1415.07" y="694.40" width="1.0" height="29.40" fill="#1d9fc0" opacity="1"/>
<rect x="1416.07" y="668.90" width="1.0" height="54.90" fill="#5f7bd8" opacity="1"/>
<rect x="1418.97" y="694.40" width="1.0" height="29.40" fill="#1d9fc0" opacity="1"/>
<rect x="1419.97" y="668.90" width="1.0" height="54.90" fill="#5f7bd8" opacity="1"/>
<rect x="1422.86" y="694.40" width="1.0" height="29.40" fill="#1d9fc0" opacity="1"/>
<rect x="1423.86" y="668.90" width="1.0" height="54.90" fill="#5f7bd8" opacity="1"/>
<rect x="1426.75" y="694.40" width="1.0" height="29.40" fill="#1d9fc0" opacity="1"/>
<rect x="1427.75" y="668.90" width="1.0" height="54.90" fill="#5f7bd8" opacity="1"/>
<rect x="1430.65" y="694.40" width="1.0" height="29.40" fill="#1d9fc0" opacity="1"/>
<rect x="1431.65" y="668.90" width="1.0" height="54.90" fill="#5f7bd8" opacity="1"/>
<rect x="1434.54" y="694.40" width="1.0" height="29.40" fill="#1d9fc0" opacity="1"/>
<rect x="1435.54" y="668.90" width="1.0" height="54.90" fill="#5f7bd8" opacity="1"/>
<rect x="1438.43" y="694.40" width="1.0" height="29.40" fill="#1d9fc0" opacity="1"/>
<rect x="1439.43" y="668.90" width="1.0" height="54.90" fill="#5f7bd8" opacity="1"/>
<rect x="1442.33" y="694.40" width="1.0" height="29.40" fill="#1d9fc0" opacity="1"/>
<rect x="1443.33" y="668.90" width="1.0" height="54.90" fill="#5f7bd8" opacity="1"/>
<rect x="1446.22" y="694.40" width="1.0" height="29.40" fill="#1d9fc0" opacity="1"/>
<rect x="1447.22" y="668.90" width="1.0" height="54.90" fill="#5f7bd8" opacity="1"/>
<rect x="1450.11" y="694.40" width="1.0" height="29.40" fill="#1d9fc0" opacity="1"/>
<rect x="1451.11" y="668.90" width="1.0" height="54.90" fill="#5f7bd8" opacity="1"/>
<rect x="1454.00" y="694.40" width="1.0" height="29.40" fill="#1d9fc0" opacity="1"/>
<rect x="1455.00" y="668.90" width="1.0" height="54.90" fill="#5f7bd8" opacity="1"/>
<rect x="1457.90" y="694.40" width="1.0" height="29.40" fill="#1d9fc0" opacity="1"/>
<rect x="1458.90" y="668.90" width="1.0" height="54.90" fill="#5f7bd8" opacity="1"/>
<rect x="1461.79" y="694.40" width="1.0" height="29.40" fill="#1d9fc0" opacity="1"/>
<rect x="1462.79" y="668.90" width="1.0" height="54.90" fill="#5f7bd8" opacity="1"/>
<rect x="1465.68" y="694.40" width="1.0" height="29.40" fill="#1d9fc0" opacity="1"/>
<rect x="1466.68" y="668.90" width="1.0" height="54.90" fill="#5f7bd8" opacity="1"/>
<rect x="1469.58" y="694.40" width="1.0" height="29.40" fill="#1d9fc0" opacity="1"/>
<rect x="1470.58" y="668.90" width="1.0" height="54.90" fill="#5f7bd8" opacity="1"/>
<rect x="1473.47" y="694.40" width="1.0" height="29.40" fill="#1d9fc0" opacity="1"/>
<rect x="1474.47" y="668.90" width="1.0" height="54.90" fill="#5f7bd8" opacity="1"/>
<rect x="1477.36" y="694.40" width="1.0" height="29.40" fill="#1d9fc0" opacity="1"/>
<rect x="1478.36" y="668.90" width="1.0" height="54.90" fill="#5f7bd8" opacity="1"/>
<rect x="1481.26" y="694.40" width="1.0" height="29.40" fill="#1d9fc0" opacity="1"/>
<rect x="1482.26" y="668.90" width="1.0" height="54.90" fill="#5f7bd8" opacity="1"/>
<rect x="1485.15" y="694.40" width="1.0" height="29.40" fill="#1d9fc0" opacity="1"/>
<rect x="1486.15" y="668.90" width="1.0" height="54.90" fill="#5f7bd8" opacity="1"/>
<rect x="1489.04" y="694.40" width="1.0" height="29.40" fill="#1d9fc0" opacity="1"/>
<rect x="1490.04" y="668.90" width="1.0" height="54.90" fill="#5f7bd8" opacity="1"/>
<rect x="1492.93" y="694.40" width="1.0" height="29.40" fill="#1d9fc0" opacity="1"/>
<rect x="1493.93" y="668.90" width="1.0" height="54.90" fill="#5f7bd8" opacity="1"/>
<rect x="1496.83" y="694.40" width="1.0" height="29.40" fill="#1d9fc0" opacity="1"/>
<rect x="1497.83" y="668.90" width="1.0" height="54.90" fill="#5f7bd8" opacity="1"/>
<rect x="1500.72" y="694.40" width="1.0" height="29.40" fill="#1d9fc0" opacity="1"/>
<rect x="1501.72" y="668.90" width="1.0" height="54.90" fill="#5f7bd8" opacity="1"/>
<rect x="1504.61" y="694.40" width="1.0" height="29.40" fill="#1d9fc0" opacity="1"/>
<rect x="1505.61" y="668.90" width="1.0" height="54.90" fill="#5f7bd8" opacity="1"/>
<rect x="1508.51" y="694.40" width="1.0" height="29.40" fill="#1d9fc0" opacity="1"/>
<rect x="1509.51" y="668.90" width="1.0" height="54.90" fill="#5f7bd8" opacity="1"/>
<rect x="1512.40" y="694.40" width="1.0" height="29.40" fill="#1d9fc0" opacity="1"/>
<rect x="1513.40" y="668.90" width="1.0" height="54.90" fill="#5f7bd8" opacity="1"/>
<rect x="1516.29" y="694.40" width="1.0" height="29.40" fill="#1d9fc0" opacity="1"/>
<rect x="1517.29" y="668.90" width="1.0" height="54.90" fill="#5f7bd8" opacity="1"/>
<rect x="1520.18" y="694.40" width="1.0" height="29.40" fill="#1d9fc0" opacity="1"/>
<rect x="1521.18" y="668.90" width="1.0" height="54.90" fill="#5f7bd8" opacity="1"/>
<rect x="1524.08" y="694.40" width="1.0" height="29.40" fill="#1d9fc0" opacity="1"/>
<rect x="1525.08" y="668.90" width="1.0" height="54.90" fill="#5f7bd8" opacity="1"/>
<rect x="1527.97" y="694.40" width="1.0" height="29.40" fill="#1d9fc0" opacity="1"/>
<rect x="1528.97" y="668.90" width="1.0" height="54.90" fill="#5f7bd8" opacity="1"/>
<rect x="1531.86" y="694.40" width="1.0" height="29.40" fill="#1d9fc0" opacity="1"/>
<rect x="1532.86" y="668.90" width="1.0" height="54.90" fill="#5f7bd8" opacity="1"/>
<rect x="1535.76" y="694.40" width="1.0" height="29.40" fill="#1d9fc0" opacity="1"/>
<rect x="1536.76" y="668.90" width="1.0" height="54.90" fill="#5f7bd8" opacity="1"/>
<rect x="1539.65" y="694.40" width="1.0" height="29.40" fill="#1d9fc0" opacity="1"/>
<rect x="1540.65" y="668.90" width="1.0" height="54.90" fill="#5f7bd8" opacity="1"/>
<rect x="1543.54" y="694.40" width="1.0" height="29.40" fill="#1d9fc0" opacity="1"/>
<rect x="1544.54" y="668.90" width="1.0" height="54.90" fill="#5f7bd8" opacity="1"/>
<rect x="1547.44" y="694.40" width="1.0" height="29.40" fill="#1d9fc0" opacity="1"/>
<rect x="1548.44" y="668.90" width="1.0" height="54.90" fill="#5f7bd8" opacity="1"/>
<rect x="1551.33" y="694.40" width="1.0" height="29.40" fill="#1d9fc0" opacity="1"/>
<rect x="1552.33" y="668.90" width="1.0" height="54.90" fill="#5f7bd8" opacity="1"/>
<rect x="1555.22" y="694.40" width="1.0" height="29.40" fill="#1d9fc0" opacity="1"/>
<rect x="1556.22" y="668.90" width="1.0" height="54.90" fill="#5f7bd8" opacity="1"/>
<rect x="1559.12" y="694.40" width="1.0" height="29.40" fill="#1d9fc0" opacity="1"/>
<rect x="1560.12" y="668.90" width="1.0" height="54.90" fill="#5f7bd8" opacity="1"/>
<rect x="1563.01" y="694.40" width="1.0" height="29.40" fill="#1d9fc0" opacity="1"/>
<rect x="1564.01" y="668.90" width="1.0" height="54.90" fill="#5f7bd8" opacity="1"/>
<rect x="1566.90" y="694.40" width="1.0" height="29.40" fill="#1d9fc0" opacity="1"/>
<rect x="1567.90" y="668.90" width="1.0" height="54.90" fill="#5f7bd8" opacity="1"/>
<rect x="1570.79" y="694.40" width="1.0" height="29.40" fill="#1d9fc0" opacity="1"/>
<rect x="1571.79" y="668.90" width="1.0" height="54.90" fill="#5f7bd8" opacity="1"/>
<rect x="1574.69" y="694.40" width="1.0" height="29.40" fill="#1d9fc0" opacity="1"/>
<rect x="1575.69" y="668.90" width="1.0" height="54.90" fill="#5f7bd8" opacity="1"/>
<rect x="1578.58" y="694.40" width="1.0" height="29.40" fill="#1d9fc0" opacity="1"/>
<rect x="1579.58" y="668.90" width="1.0" height="54.90" fill="#5f7bd8" opacity="1"/>
<rect x="1582.47" y="694.40" width="1.0" height="29.40" fill="#1d9fc0" opacity="1"/>
<rect x="1583.47" y="668.90" width="1.0" height="54.90" fill="#5f7bd8" opacity="1"/>
<rect x="1586.37" y="694.40" width="1.0" height="29.40" fill="#1d9fc0" opacity="1"/>
<rect x="1587.37" y="668.90" width="1.0" height="54.90" fill="#5f7bd8" opacity="1"/>
<rect x="1590.26" y="694.40" width="1.0" height="29.40" fill="#1d9fc0" opacity="1"/>
<rect x="1591.26" y="668.90" width="1.0" height="54.90" fill="#5f7bd8" opacity="1"/>
<rect x="1594.15" y="694.40" width="1.0" height="29.40" fill="#1d9fc0" opacity="1"/>
<rect x="1595.15" y="668.90" width="1.0" height="54.90" fill="#5f7bd8" opacity="1"/>
<rect x="1598.05" y="694.40" width="1.0" height="29.40" fill="#1d9fc0" opacity="1"/>
<rect x="1599.05" y="668.90" width="1.0" height="54.90" fill="#5f7bd8" opacity="1"/>
<rect x="1601.94" y="694.40" width="1.0" height="29.40" fill="#1d9fc0" opacity="1"/>
<rect x="1602.94" y="668.90" width="1.0" height="54.90" fill="#5f7bd8" opacity="1"/>
<rect x="1605.83" y="694.40" width="1.0" height="29.40" fill="#1d9fc0" opacity="1"/>
<rect x="1606.83" y="668.90" width="1.0" height="54.90" fill="#5f7bd8" opacity="1"/>
<rect x="1609.72" y="694.40" width="1.0" height="29.40" fill="#1d9fc0" opacity="1"/>
<rect x="1610.72" y="668.90" width="1.0" height="54.90" fill="#5f7bd8" opacity="1"/>
<rect x="1613.62" y="694.40" width="1.0" height="29.40" fill="#1d9fc0" opacity="1"/>
<rect x="1614.62" y="668.90" width="1.0" height="54.90" fill="#5f7bd8" opacity="1"/>
<rect x="1617.51" y="694.40" width="1.0" height="29.40" fill="#1d9fc0" opacity="1"/>
<rect x="1618.51" y="668.90" width="1.0" height="54.90" fill="#5f7bd8" opacity="1"/>
<rect x="1621.40" y="694.40" width="1.0" height="29.40" fill="#1d9fc0" opacity="1"/>
<rect x="1622.40" y="668.90" width="1.0" height="54.90" fill="#5f7bd8" opacity="1"/>
<rect x="1625.30" y="694.40" width="1.0" height="29.40" fill="#1d9fc0" opacity="1"/>
<rect x="1626.30" y="668.90" width="1.0" height="54.90" fill="#5f7bd8" opacity="1"/>
<rect x="1629.19" y="694.40" width="1.0" height="29.40" fill="#1d9fc0" opacity="1"/>
<rect x="1630.19" y="668.90" width="1.0" height="54.90" fill="#5f7bd8" opacity="1"/>
<rect x="1633.08" y="694.40" width="1.0" height="29.40" fill="#1d9fc0" opacity="1"/>
<rect x="1634.08" y="668.90" width="1.0" height="54.90" fill="#5f7bd8" opacity="1"/>
<rect x="1636.97" y="694.40" width="1.0" height="29.40" fill="#1d9fc0" opacity="1"/>
<rect x="1637.97" y="668.90" width="1.0" height="54.90" fill="#5f7bd8" opacity="1"/>
<rect x="1640.87" y="694.40" width="1.0" height="29.40" fill="#1d9fc0" opacity="1"/>
<rect x="1641.87" y="668.90" width="1.0" height="54.90" fill="#5f7bd8" opacity="1"/>
<rect x="1644.76" y="694.40" width="1.0" height="29.40" fill="#1d9fc0" opacity="1"/>
<rect x="1645.76" y="668.90" width="1.0" height="54.90" fill="#5f7bd8" opacity="1"/>
<rect x="1648.65" y="694.40" width="1.0" height="29.40" fill="#1d9fc0" opacity="1"/>
<rect x="1649.65" y="668.90" width="1.0" height="54.90" fill="#5f7bd8" opacity="1"/>
<rect x="1652.55" y="694.40" width="1.0" height="29.40" fill="#1d9fc0" opacity="1"/>
<rect x="1653.55" y="668.90" width="1.0" height="54.90" fill="#5f7bd8" opacity="1"/>
<rect x="1656.44" y="694.40" width="1.0" height="29.40" fill="#1d9fc0" opacity="1"/>
<rect x="1657.44" y="668.90" width="1.0" height="54.90" fill="#5f7bd8" opacity="1"/>
<rect x="1660.33" y="694.40" width="1.0" height="29.40" fill="#1d9fc0" opacity="1"/>
<rect x="1661.33" y="668.90" width="1.0" height="54.90" fill="#5f7bd8" opacity="1"/>
<rect x="1664.23" y="694.40" width="1.0" height="29.40" fill="#1d9fc0" opacity="1"/>
<rect x="1665.23" y="668.90" width="1.0" height="54.90" fill="#5f7bd8" opacity="1"/>
<rect x="1668.12" y="694.40" width="1.0" height="29.40" fill="#1d9fc0" opacity="1"/>
<rect x="1669.12" y="668.90" width="1.0" height="54.90" fill="#5f7bd8" opacity="1"/>
<rect x="1672.01" y="694.40" width="1.0" height="29.40" fill="#1d9fc0" opacity="1"/>
<rect x="1673.01" y="668.90" width="1.0" height="54.90" fill="#5f7bd8" opacity="1"/>
<rect x="1675.90" y="694.40" width="1.0" height="29.40" fill="#1d9fc0" opacity="1"/>
<rect x="1676.90" y="668.90" width="1.0" height="54.90" fill="#5f7bd8" opacity="1"/>
<rect x="1679.80" y="694.40" width="1.0" height="29.40" fill="#1d9fc0" opacity="1"/>
<rect x="1680.80" y="668.90" width="1.0" height="54.90" fill="#5f7bd8" opacity="1"/>
<rect x="1683.69" y="694.40" width="1.0" height="29.40" fill="#1d9fc0" opacity="1"/>
<rect x="1684.69" y="668.90" width="1.0" height="54.90" fill="#5f7bd8" opacity="1"/>
<rect x="1687.58" y="694.40" width="1.0" height="29.40" fill="#1d9fc0" opacity="1"/>
<rect x="1688.58" y="668.90" width="1.0" height="54.90" fill="#5f7bd8" opacity="1"/>
<rect x="1691.48" y="694.40" width="1.0" height="29.40" fill="#1d9fc0" opacity="1"/>
<rect x="1692.48" y="668.90" width="1.0" height="54.90" fill="#5f7bd8" opacity="1"/>
<rect x="1695.37" y="694.40" width="1.0" height="29.40" fill="#1d9fc0" opacity="1"/>
<rect x="1696.37" y="668.90" width="1.0" height="54.90" fill="#5f7bd8" opacity="1"/>
<rect x="1699.26" y="694.40" width="1.0" height="29.40" fill="#1d9fc0" opacity="1"/>
<rect x="1700.26" y="668.90" width="1.0" height="54.90" fill="#5f7bd8" opacity="1"/>
<rect x="1703.16" y="694.40" width="1.0" height="29.40" fill="#1d9fc0" opacity="1"/>
<rect x="1704.16" y="668.90" width="1.0" height="54.90" fill="#5f7bd8" opacity="1"/>
<rect x="1707.05" y="694.40" width="1.0" height="29.40" fill="#1d9fc0" opacity="1"/>
<rect x="1708.05" y="668.90" width="1.0" height="54.90" fill="#5f7bd8" opacity="1"/>
<rect x="1710.94" y="694.40" width="1.0" height="29.40" fill="#1d9fc0" opacity="1"/>
<rect x="1711.94" y="668.90" width="1.0" height="54.90" fill="#5f7bd8" opacity="1"/>
<rect x="1714.84" y="694.40" width="1.0" height="29.40" fill="#1d9fc0" opacity="1"/>
<rect x="1715.84" y="668.90" width="1.0" height="54.90" fill="#5f7bd8" opacity="1"/>
<rect x="1718.73" y="694.40" width="1.0" height="29.40" fill="#1d9fc0" opacity="1"/>
<rect x="1719.73" y="668.90" width="1.0" height="54.90" fill="#5f7bd8" opacity="1"/>
<rect x="1722.62" y="694.40" width="1.0" height="29.40" fill="#1d9fc0" opacity="1"/>
<rect x="1723.62" y="668.90" width="1.0" height="54.90" fill="#5f7bd8" opacity="1"/>
<rect x="1726.51" y="694.40" width="1.0" height="29.40" fill="#1d9fc0" opacity="1"/>
<rect x="1727.51" y="668.90" width="1.0" height="54.90" fill="#5f7bd8" opacity="1"/>
<rect x="1730.41" y="694.40" width="1.0" height="29.40" fill="#1d9fc0" opacity="1"/>
<rect x="1731.41" y="668.90" width="1.0" height="54.90" fill="#5f7bd8" opacity="1"/>
<rect x="1734.30" y="694.40" width="1.0" height="29.40" fill="#1d9fc0" opacity="1"/>
<rect x="1735.30" y="668.90" width="1.0" height="54.90" fill="#5f7bd8" opacity="1"/>
<rect x="1738.19" y="694.40" width="1.0" height="29.40" fill="#1d9fc0" opacity="1"/>
<rect x="1739.19" y="668.90" width="1.0" height="54.90" fill="#5f7bd8" opacity="1"/>
<rect x="1742.09" y="694.40" width="1.0" height="29.40" fill="#1d9fc0" opacity="1"/>
<rect x="1743.09" y="668.90" width="1.0" height="54.90" fill="#5f7bd8" opacity="1"/>
<rect x="1745.98" y="694.40" width="1.0" height="29.40" fill="#1d9fc0" opacity="1"/>
<rect x="1746.98" y="668.90" width="1.0" height="54.90" fill="#5f7bd8" opacity="1"/>
<rect x="1749.87" y="694.40" width="1.0" height="29.40" fill="#1d9fc0" opacity="1"/>
<rect x="1750.87" y="668.90" width="1.0" height="54.90" fill="#5f7bd8" opacity="1"/>
<rect x="1753.76" y="694.40" width="1.0" height="29.40" fill="#1d9fc0" opacity="1"/>
<rect x="1754.76" y="668.90" width="1.0" height="54.90" fill="#5f7bd8" opacity="1"/>
<rect x="1757.66" y="694.40" width="1.0" height="29.40" fill="#1d9fc0" opacity="1"/>
<rect x="1758.66" y="668.90" width="1.0" height="54.90" fill="#5f7bd8" opacity="1"/>
<rect x="1761.55" y="694.40" width="1.0" height="29.40" fill="#1d9fc0" opacity="1"/>
<rect x="1762.55" y="668.90" width="1.0" height="54.90" fill="#5f7bd8" opacity="1"/>
<rect x="1765.44" y="694.40" width="1.0" height="29.40" fill="#1d9fc0" opacity="1"/>
<rect x="1766.44" y="668.90" width="1.0" height="54.90" fill="#5f7bd8" opacity="1"/>
<rect x="1769.34" y="694.40" width="1.0" height="29.40" fill="#1d9fc0" opacity="1"/>
<rect x="1770.34" y="668.90" width="1.0" height="54.90" fill="#5f7bd8" opacity="1"/>
<rect x="1773.23" y="694.40" width="1.0" height="29.40" fill="#1d9fc0" opacity="1"/>
<rect x="1774.23" y="668.90" width="1.0" height="54.90" fill="#5f7bd8" opacity="1"/>
<rect x="1777.12" y="694.40" width="1.0" height="29.40" fill="#1d9fc0" opacity="1"/>
<rect x="1778.12" y="668.90" width="1.0" height="54.90" fill="#5f7bd8" opacity="1"/>
<rect x="1781.02" y="694.40" width="1.0" height="29.40" fill="#1d9fc0" opacity="1"/>
<rect x="1782.02" y="668.90" width="1.0" height="54.90" fill="#5f7bd8" opacity="1"/>
<rect x="1784.91" y="694.40" width="1.0" height="29.40" fill="#1d9fc0" opacity="1"/>
<rect x="1785.91" y="668.90" width="1.0" height="54.90" fill="#5f7bd8" opacity="1"/>
<rect x="1788.80" y="694.40" width="1.0" height="29.40" fill="#1d9fc0" opacity="1"/>
<rect x="1789.80" y="668.90" width="1.0" height="54.90" fill="#5f7bd8" opacity="1"/>
<rect x="1792.69" y="694.40" width="1.0" height="29.40" fill="#1d9fc0" opacity="1"/>
<rect x="1793.69" y="668.90" width="1.0" height="54.90" fill="#5f7bd8" opacity="1"/>
<rect x="1796.59" y="694.40" width="1.0" height="29.40" fill="#1d9fc0" opacity="1"/>
<rect x="1797.59" y="668.90" width="1.0" height="54.90" fill="#5f7bd8" opacity="1"/>
<rect x="1800.48" y="694.40" width="1.0" height="29.40" fill="#1d9fc0" opacity="1"/>
<rect x="1801.48" y="668.90" width="1.0" height="54.90" fill="#5f7bd8" opacity="1"/>
<rect x="1804.37" y="694.40" width="1.0" height="29.40" fill="#1d9fc0" opacity="1"/>
<rect x="1805.37" y="668.90" width="1.0" height="54.90" fill="#5f7bd8" opacity="1"/>
<rect x="1808.27" y="694.40" width="1.0" height="29.40" fill="#1d9fc0" opacity="1"/>
<rect x="1809.27" y="668.90" width="1.0" height="54.90" fill="#5f7bd8" opacity="1"/>
<rect x="1812.16" y="694.40" width="1.0" height="29.40" fill="#1d9fc0" opacity="1"/>
<rect x="1813.16" y="668.90" width="1.0" height="54.90" fill="#5f7bd8" opacity="1"/>
<rect x="1816.05" y="694.40" width="1.0" height="29.40" fill="#1d9fc0" opacity="1"/>
<rect x="1817.05" y="668.90" width="1.0" height="54.90" fill="#5f7bd8" opacity="1"/>
<rect x="1819.95" y="694.40" width="1.0" height="29.40" fill="#1d9fc0" opacity="1"/>
<rect x="1820.95" y="676.50" width="1.0" height="47.30" fill="#5f7bd8" opacity="1"/>
<rect x="1823.84" y="694.40" width="1.0" height="29.40" fill="#1d9fc0" opacity="1"/>
<rect x="1824.84" y="676.50" width="1.0" height="47.30" fill="#5f7bd8" opacity="1"/>
<rect x="1827.73" y="694.40" width="1.0" height="29.40" fill="#1d9fc0" opacity="1"/>
<rect x="1828.73" y="676.50" width="1.0" height="47.30" fill="#5f7bd8" opacity="1"/>
<rect x="1831.62" y="694.40" width="1.0" height="29.40" fill="#1d9fc0" opacity="1"/>
<rect x="1832.62" y="676.50" width="1.0" height="47.30" fill="#5f7bd8" opacity="1"/>
<rect x="1835.52" y="694.40" width="1.0" height="29.40" fill="#1d9fc0" opacity="1"/>
<rect x="1836.52" y="676.50" width="1.0" height="47.30" fill="#5f7bd8" opacity="1"/>
<rect x="1839.41" y="694.40" width="1.0" height="29.40" fill="#1d9fc0" opacity="1"/>
<rect x="1840.41" y="671.40" width="1.0" height="52.40" fill="#5f7bd8" opacity="1"/>
<rect x="1843.30" y="694.40" width="1.0" height="29.40" fill="#1d9fc0" opacity="1"/>
<rect x="1844.30" y="671.40" width="1.0" height="52.40" fill="#5f7bd8" opacity="1"/>
<rect x="1847.20" y="694.40" width="1.0" height="29.40" fill="#1d9fc0" opacity="1"/>
<rect x="1848.20" y="671.40" width="1.0" height="52.40" fill="#5f7bd8" opacity="1"/>
<rect x="1851.09" y="694.40" width="1.0" height="29.40" fill="#1d9fc0" opacity="1"/>
<rect x="1852.09" y="671.40" width="1.0" height="52.40" fill="#5f7bd8" opacity="1"/>
<rect x="1854.98" y="694.40" width="1.0" height="29.40" fill="#1d9fc0" opacity="1"/>
<rect x="1855.98" y="671.40" width="1.0" height="52.40" fill="#5f7bd8" opacity="1"/>
<rect x="1858.88" y="694.40" width="1.0" height="29.40" fill="#1d9fc0" opacity="1"/>
<rect x="1859.88" y="671.40" width="1.0" height="52.40" fill="#5f7bd8" opacity="1"/>
<rect x="1862.77" y="694.40" width="1.0" height="29.40" fill="#1d9fc0" opacity="1"/>
<rect x="1863.77" y="671.40" width="1.0" height="52.40" fill="#5f7bd8" opacity="1"/>
<rect x="1866.66" y="694.40" width="1.0" height="29.40" fill="#1d9fc0" opacity="1"/>
<rect x="1867.66" y="671.40" width="1.0" height="52.40" fill="#5f7bd8" opacity="1"/>
<rect x="1870.55" y="694.40" width="1.0" height="29.40" fill="#1d9fc0" opacity="1"/>
<rect x="1871.55" y="671.40" width="1.0" height="52.40" fill="#5f7bd8" opacity="1"/>
<rect x="1874.45" y="694.40" width="1.0" height="29.40" fill="#1d9fc0" opacity="1"/>
<rect x="1875.45" y="671.40" width="1.0" height="52.40" fill="#5f7bd8" opacity="1"/>
<rect x="1878.34" y="694.40" width="1.0" height="29.40" fill="#1d9fc0" opacity="1"/>
<rect x="1879.34" y="675.30" width="1.0" height="48.50" fill="#5f7bd8" opacity="1"/>
<line x1="1345.2" y1="593.6" x2="1345.2" y2="723.8" stroke="#8d8d8d" stroke-width="1.6"/>
<line x1="1345.2" y1="723.8" x2="1880.5" y2="723.8" stroke="#8d8d8d" stroke-width="1.6"/>
</g>
<path d="M215.5 403.8 L291.78 408.06 A76.39999999999999 76.39999999999999 0 0 1 285.35 434.75 Z" fill="#fec453" stroke="#fff" stroke-width="1.6" stroke-linejoin="round"/>
<path d="M215.5 403.8 L283.51 438.60 A76.39999999999999 76.39999999999999 0 1 1 291.90 404.60 Z" fill="#425dc9" stroke="#fff" stroke-width="1.6" stroke-linejoin="round"/>
<path d="M521.1 404 L596.82 415.59 A76.6 76.6 0 1 1 597.70 404.80 Z" fill="#425dc9" stroke="#fff" stroke-width="1.6" stroke-linejoin="round"/>
<path d="M215.4 674 L291.75 676.67 A76.39999999999999 76.39999999999999 0 0 1 291.20 683.58 Z" fill="#00bf9d" stroke="#fff" stroke-width="1.6" stroke-linejoin="round"/>
<path d="M215.4 674 L290.66 687.14 A76.39999999999999 76.39999999999999 0 0 1 260.20 735.89 Z" fill="#fec453" stroke="#fff" stroke-width="1.6" stroke-linejoin="round"/>
<path d="M215.4 674 L258.67 736.96 A76.39999999999999 76.39999999999999 0 1 1 291.80 674.80 Z" fill="#425dc9" stroke="#fff" stroke-width="1.6" stroke-linejoin="round"/>
<g clip-path="url(#c41)">
<clipPath id="c41"><rect x="75" y="840" width="287" height="157"/></clipPath>
<path d="M215.2 943.5 L291.16 946.02 A76.0 76.0 0 0 1 194.76 1016.70 Z" fill="#fec453" stroke="#fff" stroke-width="1.6" stroke-linejoin="round"/>
<path d="M215.2 943.5 L193.74 1016.41 A76.0 76.0 0 1 1 291.20 944.30 Z" fill="#425dc9" stroke="#fff" stroke-width="1.6" stroke-linejoin="round"/>
</g></svg>
<div class="a" style="left:456px;top:580.2px;width:209px;height:27.4px;border-radius:4px;background:#cfe9fc"></div>
<div class="a" style="left:395px;top:585.2px;width:51px;text-align:right;font-size:15px;color:#34343f;line-height:18px;-webkit-text-stroke:0.25px #34343f">471</div>
<div class="a" style="left:464px;top:586.2px;font-size:13px;color:#3a3a48;line-height:16px;letter-spacing:0.5px">reads</div>
<div class="a" style="left:456px;top:629.2px;width:29px;height:27.4px;border-radius:4px;background:#cfe9fc"></div>
<div class="a" style="left:395px;top:634.2px;width:51px;text-align:right;font-size:15px;color:#34343f;line-height:18px;-webkit-text-stroke:0.25px #34343f">65</div>
<div class="a" style="left:464px;top:635.2px;font-size:13px;color:#3a3a48;line-height:16px;letter-spacing:0.5px">writes</div>
<div class="a" style="left:456px;top:678.2px;width:2.8px;height:27.4px;border-radius:4px;background:#cfe9fc"></div>
<div class="a" style="left:395px;top:683.2px;width:51px;text-align:right;font-size:15px;color:#34343f;line-height:18px;-webkit-text-stroke:0.25px #34343f">7</div>
<div class="a" style="left:464px;top:684.2px;font-size:13px;color:#3a3a48;line-height:16px;letter-spacing:0.5px">fsyncs</div>
<div class="a" style="left:456px;top:850.2px;width:203px;height:27.4px;border-radius:4px;background:#cfe9fc"></div>
<div class="a" style="left:395px;top:855.2px;width:51px;text-align:right;font-size:15px;color:#34343f;line-height:18px;-webkit-text-stroke:0.25px #34343f">41</div>
<div class="a" style="left:464px;top:856.2px;font-size:13px;color:#3a3a48;line-height:16px;letter-spacing:0.5px">read</div>
<div class="a" style="left:456px;top:899.2px;width:79px;height:27.4px;border-radius:4px;background:#cfe9fc"></div>
<div class="a" style="left:395px;top:904.2px;width:51px;text-align:right;font-size:15px;color:#34343f;line-height:18px;-webkit-text-stroke:0.25px #34343f">16</div>
<div class="a" style="left:464px;top:905.2px;font-size:13px;color:#3a3a48;line-height:16px;letter-spacing:0.5px">inserted</div>
<div class="a" style="left:395px;top:953.2px;width:51px;text-align:right;font-size:15px;color:#34343f;line-height:18px;-webkit-text-stroke:0.25px #34343f">0</div>
<div class="a" style="left:464px;top:954.2px;font-size:13px;color:#3a3a48;line-height:16px;letter-spacing:0.5px">deleted</div>
<div class="a" style="left:663px;top:840px;width:6px;height:157px;background:#ececec"></div>
<div class="a" style="left:1300px;top:838px;width:588px;height:46px;background:#ffecee;border-top:1px solid #fbd3d3;border-bottom:1px solid #fbd3d3"></div>
<div class="a" style="left:1311.4px;top:854px;font-size:13px;font-weight:bold;color:#262637;line-height:15px;white-space:nowrap;letter-spacing:0px">SCHEMA</div>
<svg class="a" style="left:1376px;top:854px" width="7" height="16" viewBox="0 0 7 16" fill="none" stroke="#c9c9cc" stroke-width="1.1" stroke-linecap="round"><path d="M1 5 L3.5 2 L6 5 M1 11 L3.5 14 L6 11"/></svg>
<div class="a" style="left:1418.1px;top:854px;font-size:13px;font-weight:bold;color:#262637;line-height:15px;white-space:nowrap;letter-spacing:0px">TABLE</div>
<svg class="a" style="left:1467px;top:854px" width="7" height="16" viewBox="0 0 7 16" fill="none" stroke="#c9c9cc" stroke-width="1.1" stroke-linecap="round"><path d="M1 5 L3.5 2 L6 5 M1 11 L3.5 14 L6 11"/></svg>
<div class="a" style="left:1505.7px;top:854px;font-size:13px;font-weight:bold;color:#262637;line-height:15px;white-space:nowrap;letter-spacing:0px">OPERATION</div>
<svg class="a" style="left:1589px;top:854px" width="7" height="16" viewBox="0 0 7 16" fill="none" stroke="#c9c9cc" stroke-width="1.1" stroke-linecap="round"><path d="M1 5 L3.5 2 L6 5 M1 11 L3.5 14 L6 11"/></svg>
<div class="a" style="left:1633.6px;top:854px;font-size:13px;font-weight:bold;color:#262637;line-height:15px;white-space:nowrap;letter-spacing:0px">MYSQL TABLE IO WAIT COUNT</div>
<svg class="a" style="left:1836.6px;top:854px" width="7" height="16" viewBox="0 0 7 16" fill="none" stroke="#c9c9cc" stroke-width="1.1" stroke-linecap="round"><path d="M1 5 L3.5 2 L6 5 M1 11 L3.5 14 L6 11"/></svg>
<div class="a" style="left:1300px;top:919.6px;width:588px;height:1px;background:#e1e1e1"></div>
<div class="a" style="left:1310.4px;top:894.6px;font-size:13px;color:#30303c;line-height:16px;white-space:nowrap;letter-spacing:0.35px">todo3</div>
<div class="a" style="left:1417px;top:894.6px;font-size:13px;color:#30303c;line-height:16px;white-space:nowrap;letter-spacing:0.35px">tutorials</div>
<div class="a" style="left:1504.5px;top:894.6px;font-size:13px;color:#30303c;line-height:16px;white-space:nowrap;letter-spacing:0.35px">fetch</div>
<div class="a" style="left:1633px;top:894.6px;font-size:13px;color:#30303c;line-height:16px;white-space:nowrap;letter-spacing:0.35px">1</div>
<div class="a" style="left:1300px;top:956.6px;width:588px;height:1px;background:#e1e1e1"></div>
<div class="a" style="left:1310.4px;top:931.6px;font-size:13px;color:#30303c;line-height:16px;white-space:nowrap;letter-spacing:0.35px">todo1</div>
<div class="a" style="left:1417px;top:931.6px;font-size:13px;color:#30303c;line-height:16px;white-space:nowrap;letter-spacing:0.35px">tutorials1</div>
<div class="a" style="left:1504.5px;top:931.6px;font-size:13px;color:#30303c;line-height:16px;white-space:nowrap;letter-spacing:0.35px">update</div>
<div class="a" style="left:1633px;top:931.6px;font-size:13px;color:#30303c;line-height:16px;white-space:nowrap;letter-spacing:0.35px">-</div>
<div class="a" style="left:1300px;top:993.6px;width:588px;height:1px;background:#e1e1e1"></div>
<div class="a" style="left:1310.4px;top:968.6px;font-size:13px;color:#30303c;line-height:16px;white-space:nowrap;letter-spacing:0.35px">todo2</div>
<div class="a" style="left:1417px;top:968.6px;font-size:13px;color:#30303c;line-height:16px;white-space:nowrap;letter-spacing:0.35px">tutorials</div>
<div class="a" style="left:1504.5px;top:968.6px;font-size:13px;color:#30303c;line-height:16px;white-space:nowrap;letter-spacing:0.35px">update</div>
<div class="a" style="left:1633px;top:968.6px;font-size:13px;color:#30303c;line-height:16px;white-space:nowrap;letter-spacing:0.35px">-</div>
<div class="a" style="left:1888.5px;top:839px;width:6px;height:58px;border-radius:3px;background:#e4e4e5"></div>
</body></html>
